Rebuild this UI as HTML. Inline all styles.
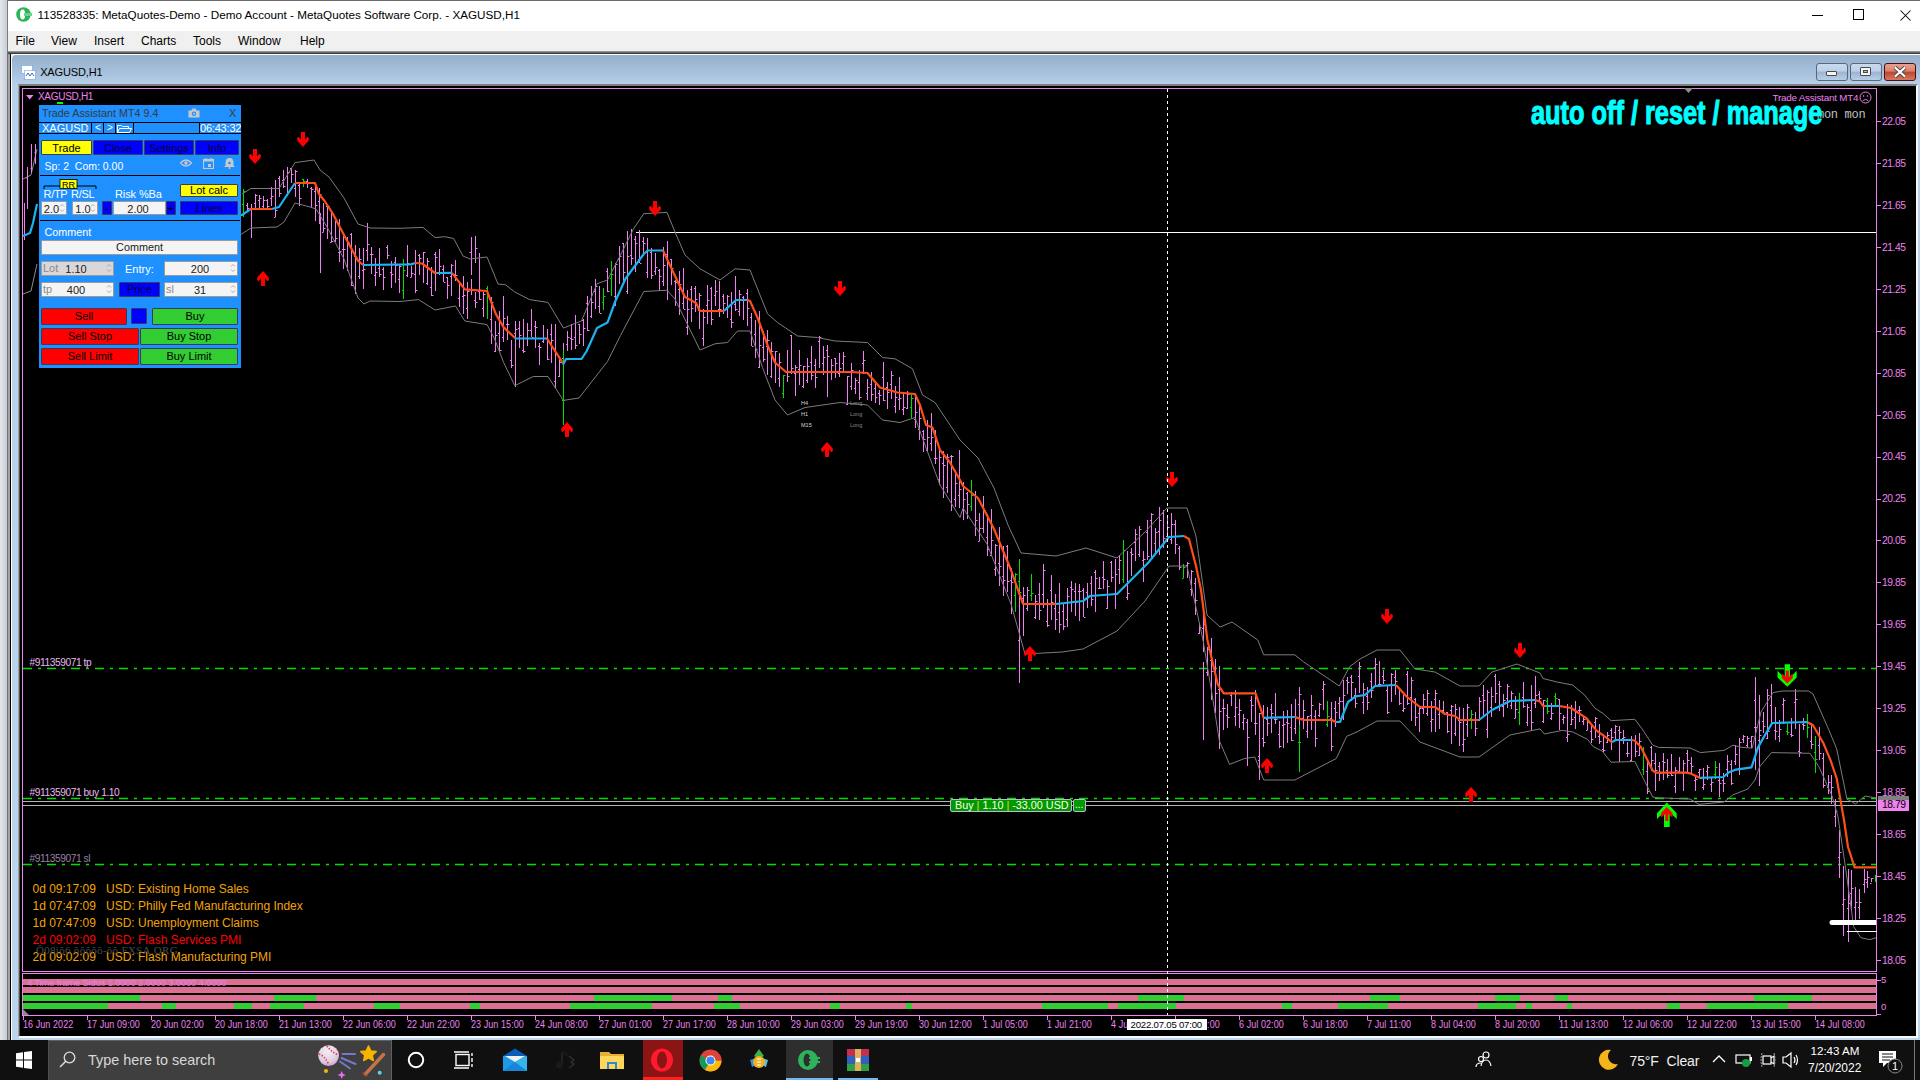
<!DOCTYPE html>
<html><head><meta charset="utf-8">
<style>
*{box-sizing:border-box}
html,body{margin:0;padding:0;width:1920px;height:1080px;overflow:hidden;background:#000;font-family:"Liberation Sans", sans-serif}
.a{position:absolute}
.t{position:absolute;white-space:nowrap;line-height:1}
</style></head><body>
<div class="a" style="left:0;top:0;width:8px;height:1040px;background:linear-gradient(90deg,#e2e8ee,#c4cad0)"></div>
<div class="a" style="left:7px;top:0;width:1913px;height:1040px;background:#f0f0f0;border-left:1px solid #7a7a7a;border-top:1px solid #6a6a6a"></div>
<div class="a" style="left:7px;top:52px;width:4px;height:988px;background:linear-gradient(90deg,#707478 0,#707478 1px,#a4a4a4 1px,#a4a4a4 3px,#000 3px)"></div>
<div class="a" style="left:8px;top:1px;width:1912px;height:30px;background:#fff"></div>
<!-- MDI child -->
<div class="a" style="left:8px;top:51px;width:1912px;height:3px;background:linear-gradient(180deg,#a8a8a8,#282828)"></div>
<div class="a" style="left:11px;top:54px;width:1909px;height:986px;background:linear-gradient(180deg,#95afcc 0px,#a6bfda 16px,#b8d0e9 30px,#bcd4ec 100%);border-left:1px solid #fff;border-top:1px solid #fff;border-top-left-radius:5px"></div>
<div class="a" style="left:18px;top:84px;width:1900px;height:954px;background:#000;border-left:1px solid #a0a0a0;border-top:2px solid #808080;border-right:2px solid #f8f8f8;border-bottom:2px solid #f8f8f8"></div>
<div class="a" style="left:19px;top:86px;width:1px;height:950px;background:#505050"></div>
<!-- chart border -->
<div class="a" style="left:22px;top:88px;width:1855px;height:884px;border:1px solid #ee82ee"></div>
<div class="a" style="left:22px;top:973px;width:1855px;height:43px;border:1px solid #ee82ee"></div>
<div class="a" style="left:23px;top:979px;width:1853px;height:6px;background:#db7093"></div><div class="a" style="left:23px;top:987px;width:1853px;height:6px;background:#db7093"></div><div class="a" style="left:23px;top:995px;width:117px;height:6px;background:#32cd32"></div><div class="a" style="left:140px;top:995px;width:134px;height:6px;background:#db7093"></div><div class="a" style="left:274px;top:995px;width:42px;height:6px;background:#32cd32"></div><div class="a" style="left:316px;top:995px;width:278px;height:6px;background:#db7093"></div><div class="a" style="left:594px;top:995px;width:78px;height:6px;background:#32cd32"></div><div class="a" style="left:672px;top:995px;width:46px;height:6px;background:#db7093"></div><div class="a" style="left:718px;top:995px;width:14px;height:6px;background:#32cd32"></div><div class="a" style="left:732px;top:995px;width:406px;height:6px;background:#db7093"></div><div class="a" style="left:1138px;top:995px;width:46px;height:6px;background:#32cd32"></div><div class="a" style="left:1184px;top:995px;width:186px;height:6px;background:#db7093"></div><div class="a" style="left:1370px;top:995px;width:30px;height:6px;background:#32cd32"></div><div class="a" style="left:1400px;top:995px;width:95px;height:6px;background:#db7093"></div><div class="a" style="left:1495px;top:995px;width:25px;height:6px;background:#32cd32"></div><div class="a" style="left:1520px;top:995px;width:35px;height:6px;background:#db7093"></div><div class="a" style="left:1555px;top:995px;width:13px;height:6px;background:#32cd32"></div><div class="a" style="left:1568px;top:995px;width:186px;height:6px;background:#db7093"></div><div class="a" style="left:1754px;top:995px;width:58px;height:6px;background:#32cd32"></div><div class="a" style="left:1812px;top:995px;width:64px;height:6px;background:#db7093"></div><div class="a" style="left:23px;top:1003px;width:85px;height:6px;background:#32cd32"></div><div class="a" style="left:108px;top:1003px;width:54px;height:6px;background:#db7093"></div><div class="a" style="left:162px;top:1003px;width:14px;height:6px;background:#32cd32"></div><div class="a" style="left:176px;top:1003px;width:58px;height:6px;background:#db7093"></div><div class="a" style="left:234px;top:1003px;width:18px;height:6px;background:#32cd32"></div><div class="a" style="left:252px;top:1003px;width:18px;height:6px;background:#db7093"></div><div class="a" style="left:270px;top:1003px;width:34px;height:6px;background:#32cd32"></div><div class="a" style="left:304px;top:1003px;width:70px;height:6px;background:#db7093"></div><div class="a" style="left:374px;top:1003px;width:26px;height:6px;background:#32cd32"></div><div class="a" style="left:400px;top:1003px;width:70px;height:6px;background:#db7093"></div><div class="a" style="left:470px;top:1003px;width:10px;height:6px;background:#32cd32"></div><div class="a" style="left:480px;top:1003px;width:90px;height:6px;background:#db7093"></div><div class="a" style="left:570px;top:1003px;width:82px;height:6px;background:#32cd32"></div><div class="a" style="left:652px;top:1003px;width:62px;height:6px;background:#db7093"></div><div class="a" style="left:714px;top:1003px;width:26px;height:6px;background:#32cd32"></div><div class="a" style="left:740px;top:1003px;width:90px;height:6px;background:#db7093"></div><div class="a" style="left:830px;top:1003px;width:10px;height:6px;background:#32cd32"></div><div class="a" style="left:840px;top:1003px;width:66px;height:6px;background:#db7093"></div><div class="a" style="left:906px;top:1003px;width:6px;height:6px;background:#32cd32"></div><div class="a" style="left:912px;top:1003px;width:130px;height:6px;background:#db7093"></div><div class="a" style="left:1042px;top:1003px;width:66px;height:6px;background:#32cd32"></div><div class="a" style="left:1108px;top:1003px;width:10px;height:6px;background:#db7093"></div><div class="a" style="left:1118px;top:1003px;width:58px;height:6px;background:#32cd32"></div><div class="a" style="left:1176px;top:1003px;width:106px;height:6px;background:#db7093"></div><div class="a" style="left:1282px;top:1003px;width:10px;height:6px;background:#32cd32"></div><div class="a" style="left:1292px;top:1003px;width:46px;height:6px;background:#db7093"></div><div class="a" style="left:1338px;top:1003px;width:50px;height:6px;background:#32cd32"></div><div class="a" style="left:1388px;top:1003px;width:90px;height:6px;background:#db7093"></div><div class="a" style="left:1478px;top:1003px;width:38px;height:6px;background:#32cd32"></div><div class="a" style="left:1516px;top:1003px;width:10px;height:6px;background:#db7093"></div><div class="a" style="left:1526px;top:1003px;width:6px;height:6px;background:#32cd32"></div><div class="a" style="left:1532px;top:1003px;width:35px;height:6px;background:#db7093"></div><div class="a" style="left:1567px;top:1003px;width:5px;height:6px;background:#32cd32"></div><div class="a" style="left:1572px;top:1003px;width:95px;height:6px;background:#db7093"></div><div class="a" style="left:1667px;top:1003px;width:13px;height:6px;background:#32cd32"></div><div class="a" style="left:1680px;top:1003px;width:27px;height:6px;background:#db7093"></div><div class="a" style="left:1707px;top:1003px;width:81px;height:6px;background:#32cd32"></div><div class="a" style="left:1788px;top:1003px;width:88px;height:6px;background:#db7093"></div>
<svg class="a" style="left:0;top:0" width="1920" height="1080"><line x1="23" y1="668.5" x2="1876" y2="668.5" stroke="#00e000" stroke-width="1.3" stroke-dasharray="9 6 3 6"/><line x1="23" y1="798.5" x2="1876" y2="798.5" stroke="#00e000" stroke-width="1.3" stroke-dasharray="9 6 3 6"/><line x1="23" y1="864.5" x2="1876" y2="864.5" stroke="#00e000" stroke-width="1.3" stroke-dasharray="9 6 3 6"/><line x1="23" y1="801.5" x2="1876" y2="801.5" stroke="#b4b4b4" stroke-width="1"/><line x1="23" y1="805.5" x2="1876" y2="805.5" stroke="#b4b4b4" stroke-width="1"/><line x1="636" y1="232.5" x2="1876" y2="232.5" stroke="#ffffff" stroke-width="1"/><g stroke-width="1" fill="none"><path d="M243.5 189V217M242 204.5h1.5M244 191.5h1.5" stroke="#00e000"/><path d="M247.5 203V211M246 205.5h1.5M248 208.5h1.5" stroke="#ee82ee"/><path d="M251.5 204V238M250 209.5h1.5M252 208.5h1.5" stroke="#ee82ee"/><path d="M255.5 194V209M254 203.5h1.5M256 195.5h1.5" stroke="#ee82ee"/><path d="M259.5 195V208M258 200.5h1.5M260 198.5h1.5" stroke="#ee82ee"/><path d="M263.5 196V209M262 206.5h1.5M264 200.5h1.5" stroke="#ee82ee"/><path d="M267.5 199V209M266 200.5h1.5M268 206.5h1.5" stroke="#ee82ee"/><path d="M271.5 187V206M270 198.5h1.5M272 196.5h1.5" stroke="#ee82ee"/><path d="M275.5 180V217M274 217.5h1.5M276 210.5h1.5" stroke="#ee82ee"/><path d="M279.5 176V197M278 178.5h1.5M280 193.5h1.5" stroke="#ee82ee"/><path d="M283.5 170V188M282 180.5h1.5M284 186.5h1.5" stroke="#ee82ee"/><path d="M287.5 167V196M286 194.5h1.5M288 172.5h1.5" stroke="#ee82ee"/><path d="M291.5 168V183M290 168.5h1.5M292 174.5h1.5" stroke="#ee82ee"/><path d="M295.5 170V197M294 188.5h1.5M296 171.5h1.5" stroke="#ee82ee"/><path d="M299.5 182V206M298 185.5h1.5M300 198.5h1.5" stroke="#ee82ee"/><path d="M303.5 179V187M302 179.5h1.5M304 181.5h1.5" stroke="#00e000"/><path d="M307.5 179V188M306 181.5h1.5M308 182.5h1.5" stroke="#ee82ee"/><path d="M311.5 187V207M310 188.5h1.5M312 189.5h1.5" stroke="#ee82ee"/><path d="M315.5 186V221M314 191.5h1.5M316 205.5h1.5" stroke="#ee82ee"/><path d="M319.5 188V224M318 201.5h1.5M320 194.5h1.5" stroke="#ee82ee"/><path d="M323.5 203V232M322 232.5h1.5M324 228.5h1.5" stroke="#ee82ee"/><path d="M327.5 205V239M326 206.5h1.5M328 206.5h1.5" stroke="#ee82ee"/><path d="M331.5 211V242M330 242.5h1.5M332 241.5h1.5" stroke="#ee82ee"/><path d="M335.5 221V242M334 240.5h1.5M336 238.5h1.5" stroke="#ee82ee"/><path d="M339.5 219V262M338 252.5h1.5M340 251.5h1.5" stroke="#ee82ee"/><path d="M343.5 235V269M342 249.5h1.5M344 249.5h1.5" stroke="#ee82ee"/><path d="M347.5 237V271M346 265.5h1.5M348 242.5h1.5" stroke="#ee82ee"/><path d="M351.5 233V286M350 234.5h1.5M352 285.5h1.5" stroke="#ee82ee"/><path d="M355.5 245V294M354 256.5h1.5M356 258.5h1.5" stroke="#ee82ee"/><path d="M359.5 248V279M358 276.5h1.5M360 259.5h1.5" stroke="#ee82ee"/><path d="M363.5 248V289M362 270.5h1.5M364 269.5h1.5" stroke="#ee82ee"/><path d="M367.5 223V261M366 250.5h1.5M368 244.5h1.5" stroke="#ee82ee"/><path d="M371.5 247V274M370 254.5h1.5M372 254.5h1.5" stroke="#ee82ee"/><path d="M375.5 258V286M374 275.5h1.5M376 272.5h1.5" stroke="#ee82ee"/><path d="M379.5 248V277M378 268.5h1.5M380 274.5h1.5" stroke="#ee82ee"/><path d="M383.5 267V290M382 269.5h1.5M384 277.5h1.5" stroke="#ee82ee"/><path d="M387.5 245V259M386 247.5h1.5M388 255.5h1.5" stroke="#ee82ee"/><path d="M391.5 261V288M390 272.5h1.5M392 274.5h1.5" stroke="#ee82ee"/><path d="M395.5 257V283M394 262.5h1.5M396 265.5h1.5" stroke="#ee82ee"/><path d="M399.5 265V293M398 279.5h1.5M400 266.5h1.5" stroke="#ee82ee"/><path d="M403.5 259V299M402 290.5h1.5M404 270.5h1.5" stroke="#00e000"/><path d="M407.5 245V277M406 275.5h1.5M408 263.5h1.5" stroke="#ee82ee"/><path d="M411.5 266V277M410 277.5h1.5M412 273.5h1.5" stroke="#ee82ee"/><path d="M415.5 250V293M414 274.5h1.5M416 290.5h1.5" stroke="#ee82ee"/><path d="M419.5 254V275M418 255.5h1.5M420 258.5h1.5" stroke="#ee82ee"/><path d="M423.5 252V283M422 263.5h1.5M424 252.5h1.5" stroke="#ee82ee"/><path d="M427.5 258V285M426 283.5h1.5M428 261.5h1.5" stroke="#ee82ee"/><path d="M431.5 267V296M430 287.5h1.5M432 295.5h1.5" stroke="#ee82ee"/><path d="M435.5 252V291M434 254.5h1.5M436 257.5h1.5" stroke="#ee82ee"/><path d="M439.5 249V275M438 272.5h1.5M440 266.5h1.5" stroke="#ee82ee"/><path d="M443.5 265V282M442 269.5h1.5M444 282.5h1.5" stroke="#ee82ee"/><path d="M447.5 277V299M446 277.5h1.5M448 285.5h1.5" stroke="#ee82ee"/><path d="M451.5 264V296M450 276.5h1.5M452 265.5h1.5" stroke="#ee82ee"/><path d="M455.5 260V281M454 274.5h1.5M456 275.5h1.5" stroke="#ee82ee"/><path d="M459.5 281V307M458 298.5h1.5M460 283.5h1.5" stroke="#ee82ee"/><path d="M463.5 276V314M462 296.5h1.5M464 295.5h1.5" stroke="#ee82ee"/><path d="M467.5 282V319M466 308.5h1.5M468 291.5h1.5" stroke="#ee82ee"/><path d="M471.5 279V295M470 289.5h1.5M472 289.5h1.5" stroke="#ee82ee"/><path d="M475.5 292V308M474 300.5h1.5M476 302.5h1.5" stroke="#ee82ee"/><path d="M479.5 267V300M478 291.5h1.5M480 299.5h1.5" stroke="#ee82ee"/><path d="M483.5 292V317M482 308.5h1.5M484 294.5h1.5" stroke="#ee82ee"/><path d="M487.5 286V319M486 288.5h1.5M488 295.5h1.5" stroke="#00e000"/><path d="M491.5 297V344M490 319.5h1.5M492 302.5h1.5" stroke="#ee82ee"/><path d="M495.5 321V352M494 351.5h1.5M496 335.5h1.5" stroke="#ee82ee"/><path d="M499.5 311V352M498 333.5h1.5M500 350.5h1.5" stroke="#ee82ee"/><path d="M503.5 296V342M502 337.5h1.5M504 318.5h1.5" stroke="#ee82ee"/><path d="M507.5 316V340M506 324.5h1.5M508 324.5h1.5" stroke="#ee82ee"/><path d="M511.5 340V368M510 360.5h1.5M512 365.5h1.5" stroke="#ee82ee"/><path d="M515.5 321V348M514 333.5h1.5M516 329.5h1.5" stroke="#ee82ee"/><path d="M519.5 321V348M518 328.5h1.5M520 335.5h1.5" stroke="#ee82ee"/><path d="M523.5 319V353M522 350.5h1.5M524 351.5h1.5" stroke="#ee82ee"/><path d="M527.5 323V346M526 338.5h1.5M528 330.5h1.5" stroke="#ee82ee"/><path d="M531.5 309V337M530 330.5h1.5M532 337.5h1.5" stroke="#ee82ee"/><path d="M535.5 321V348M534 326.5h1.5M536 327.5h1.5" stroke="#ee82ee"/><path d="M539.5 343V365M538 346.5h1.5M540 347.5h1.5" stroke="#ee82ee"/><path d="M543.5 325V343M542 341.5h1.5M544 338.5h1.5" stroke="#ee82ee"/><path d="M547.5 329V360M546 338.5h1.5M548 359.5h1.5" stroke="#ee82ee"/><path d="M551.5 324V363M550 334.5h1.5M552 340.5h1.5" stroke="#ee82ee"/><path d="M555.5 324V388M554 381.5h1.5M556 354.5h1.5" stroke="#ee82ee"/><path d="M559.5 356V377M558 376.5h1.5M560 362.5h1.5" stroke="#ee82ee"/><path d="M563.5 343V366M562 358.5h1.5M564 361.5h1.5" stroke="#ee82ee"/><path d="M567.5 331V351M566 344.5h1.5M568 337.5h1.5" stroke="#ee82ee"/><path d="M571.5 324V350M570 338.5h1.5M572 339.5h1.5" stroke="#ee82ee"/><path d="M575.5 315V349M574 337.5h1.5M576 345.5h1.5" stroke="#ee82ee"/><path d="M579.5 324V344M578 324.5h1.5M580 334.5h1.5" stroke="#ee82ee"/><path d="M583.5 319V346M582 320.5h1.5M584 328.5h1.5" stroke="#ee82ee"/><path d="M587.5 296V331M586 303.5h1.5M588 330.5h1.5" stroke="#ee82ee"/><path d="M591.5 286V318M590 316.5h1.5M592 302.5h1.5" stroke="#ee82ee"/><path d="M595.5 279V309M594 291.5h1.5M596 286.5h1.5" stroke="#ee82ee"/><path d="M599.5 286V313M598 306.5h1.5M600 313.5h1.5" stroke="#ee82ee"/><path d="M603.5 288V310M602 302.5h1.5M604 296.5h1.5" stroke="#00e000"/><path d="M607.5 268V292M606 271.5h1.5M608 291.5h1.5" stroke="#ee82ee"/><path d="M611.5 261V296M610 278.5h1.5M612 274.5h1.5" stroke="#00e000"/><path d="M615.5 263V306M614 296.5h1.5M616 264.5h1.5" stroke="#ee82ee"/><path d="M619.5 246V284M618 259.5h1.5M620 256.5h1.5" stroke="#ee82ee"/><path d="M623.5 243V281M622 243.5h1.5M624 272.5h1.5" stroke="#ee82ee"/><path d="M627.5 231V294M626 291.5h1.5M628 256.5h1.5" stroke="#ee82ee"/><path d="M631.5 229V265M630 255.5h1.5M632 258.5h1.5" stroke="#ee82ee"/><path d="M635.5 236V272M634 239.5h1.5M636 243.5h1.5" stroke="#ee82ee"/><path d="M639.5 230V263M638 259.5h1.5M640 263.5h1.5" stroke="#ee82ee"/><path d="M643.5 237V253M642 241.5h1.5M644 243.5h1.5" stroke="#ee82ee"/><path d="M647.5 238V278M646 272.5h1.5M648 250.5h1.5" stroke="#ee82ee"/><path d="M651.5 248V279M650 252.5h1.5M652 275.5h1.5" stroke="#ee82ee"/><path d="M655.5 253V275M654 271.5h1.5M656 267.5h1.5" stroke="#ee82ee"/><path d="M659.5 269V291M658 270.5h1.5M660 276.5h1.5" stroke="#ee82ee"/><path d="M663.5 247V286M662 281.5h1.5M664 265.5h1.5" stroke="#ee82ee"/><path d="M667.5 241V300M666 254.5h1.5M668 263.5h1.5" stroke="#ee82ee"/><path d="M671.5 259V285M670 259.5h1.5M672 268.5h1.5" stroke="#ee82ee"/><path d="M675.5 280V306M674 281.5h1.5M676 282.5h1.5" stroke="#ee82ee"/><path d="M679.5 271V315M678 289.5h1.5M680 284.5h1.5" stroke="#ee82ee"/><path d="M683.5 268V309M682 303.5h1.5M684 309.5h1.5" stroke="#ee82ee"/><path d="M687.5 290V335M686 327.5h1.5M688 309.5h1.5" stroke="#ee82ee"/><path d="M691.5 286V322M690 289.5h1.5M692 308.5h1.5" stroke="#ee82ee"/><path d="M695.5 286V312M694 288.5h1.5M696 299.5h1.5" stroke="#ee82ee"/><path d="M699.5 293V329M698 310.5h1.5M700 295.5h1.5" stroke="#ee82ee"/><path d="M703.5 309V346M702 338.5h1.5M704 317.5h1.5" stroke="#ee82ee"/><path d="M707.5 285V324M706 305.5h1.5M708 300.5h1.5" stroke="#ee82ee"/><path d="M711.5 287V325M710 288.5h1.5M712 319.5h1.5" stroke="#ee82ee"/><path d="M715.5 280V306M714 295.5h1.5M716 291.5h1.5" stroke="#ee82ee"/><path d="M719.5 281V317M718 309.5h1.5M720 309.5h1.5" stroke="#ee82ee"/><path d="M723.5 294V314M722 296.5h1.5M724 303.5h1.5" stroke="#ee82ee"/><path d="M727.5 295V318M726 307.5h1.5M728 296.5h1.5" stroke="#ee82ee"/><path d="M731.5 292V328M730 319.5h1.5M732 322.5h1.5" stroke="#ee82ee"/><path d="M735.5 276V311M734 304.5h1.5M736 309.5h1.5" stroke="#ee82ee"/><path d="M739.5 290V316M738 311.5h1.5M740 294.5h1.5" stroke="#ee82ee"/><path d="M743.5 296V320M742 297.5h1.5M744 300.5h1.5" stroke="#ee82ee"/><path d="M747.5 289V326M746 293.5h1.5M748 308.5h1.5" stroke="#ee82ee"/><path d="M751.5 313V346M750 317.5h1.5M752 346.5h1.5" stroke="#ee82ee"/><path d="M755.5 320V358M754 334.5h1.5M756 349.5h1.5" stroke="#ee82ee"/><path d="M759.5 311V368M758 367.5h1.5M760 345.5h1.5" stroke="#ee82ee"/><path d="M763.5 331V362M762 347.5h1.5M764 359.5h1.5" stroke="#ee82ee"/><path d="M767.5 330V375M766 346.5h1.5M768 340.5h1.5" stroke="#ee82ee"/><path d="M771.5 342V378M770 376.5h1.5M772 351.5h1.5" stroke="#ee82ee"/><path d="M775.5 351V383M774 359.5h1.5M776 351.5h1.5" stroke="#ee82ee"/><path d="M779.5 353V387M778 378.5h1.5M780 362.5h1.5" stroke="#ee82ee"/><path d="M783.5 375V398M782 393.5h1.5M784 375.5h1.5" stroke="#00e000"/><path d="M787.5 350V382M786 371.5h1.5M788 376.5h1.5" stroke="#ee82ee"/><path d="M791.5 335V374M790 335.5h1.5M792 368.5h1.5" stroke="#ee82ee"/><path d="M795.5 365V396M794 373.5h1.5M796 367.5h1.5" stroke="#ee82ee"/><path d="M799.5 350V385M798 369.5h1.5M800 365.5h1.5" stroke="#ee82ee"/><path d="M803.5 366V388M802 386.5h1.5M804 366.5h1.5" stroke="#ee82ee"/><path d="M807.5 358V383M806 380.5h1.5M808 366.5h1.5" stroke="#ee82ee"/><path d="M811.5 346V380M810 362.5h1.5M812 375.5h1.5" stroke="#ee82ee"/><path d="M815.5 359V388M814 365.5h1.5M816 377.5h1.5" stroke="#ee82ee"/><path d="M819.5 336V368M818 341.5h1.5M820 337.5h1.5" stroke="#ee82ee"/><path d="M823.5 346V375M822 363.5h1.5M824 357.5h1.5" stroke="#ee82ee"/><path d="M827.5 345V397M826 350.5h1.5M828 356.5h1.5" stroke="#ee82ee"/><path d="M831.5 359V380M830 372.5h1.5M832 365.5h1.5" stroke="#ee82ee"/><path d="M835.5 358V378M834 358.5h1.5M836 363.5h1.5" stroke="#ee82ee"/><path d="M839.5 353V377M838 373.5h1.5M840 368.5h1.5" stroke="#ee82ee"/><path d="M843.5 352V372M842 363.5h1.5M844 356.5h1.5" stroke="#ee82ee"/><path d="M847.5 376V405M846 404.5h1.5M848 376.5h1.5" stroke="#ee82ee"/><path d="M851.5 363V390M850 386.5h1.5M852 370.5h1.5" stroke="#ee82ee"/><path d="M855.5 378V394M854 388.5h1.5M856 380.5h1.5" stroke="#ee82ee"/><path d="M859.5 370V400M858 382.5h1.5M860 397.5h1.5" stroke="#ee82ee"/><path d="M863.5 351V374M862 363.5h1.5M864 360.5h1.5" stroke="#ee82ee"/><path d="M867.5 379V400M866 393.5h1.5M868 387.5h1.5" stroke="#ee82ee"/><path d="M871.5 372V401M870 384.5h1.5M872 394.5h1.5" stroke="#ee82ee"/><path d="M875.5 381V403M874 388.5h1.5M876 397.5h1.5" stroke="#ee82ee"/><path d="M879.5 390V405M878 393.5h1.5M880 395.5h1.5" stroke="#ee82ee"/><path d="M883.5 362V401M882 377.5h1.5M884 400.5h1.5" stroke="#ee82ee"/><path d="M887.5 382V409M886 387.5h1.5M888 392.5h1.5" stroke="#ee82ee"/><path d="M891.5 371V399M890 384.5h1.5M892 375.5h1.5" stroke="#ee82ee"/><path d="M895.5 386V413M894 406.5h1.5M896 397.5h1.5" stroke="#ee82ee"/><path d="M899.5 377V410M898 399.5h1.5M900 398.5h1.5" stroke="#ee82ee"/><path d="M903.5 394V415M902 409.5h1.5M904 407.5h1.5" stroke="#ee82ee"/><path d="M907.5 391V409M906 408.5h1.5M908 394.5h1.5" stroke="#ee82ee"/><path d="M911.5 394V418M910 407.5h1.5M912 398.5h1.5" stroke="#00e000"/><path d="M915.5 396V428M914 419.5h1.5M916 412.5h1.5" stroke="#ee82ee"/><path d="M919.5 403V440M918 429.5h1.5M920 418.5h1.5" stroke="#ee82ee"/><path d="M923.5 430V452M922 431.5h1.5M924 439.5h1.5" stroke="#ee82ee"/><path d="M927.5 420V452M926 450.5h1.5M928 437.5h1.5" stroke="#ee82ee"/><path d="M931.5 413V451M930 443.5h1.5M932 437.5h1.5" stroke="#ee82ee"/><path d="M935.5 430V464M934 458.5h1.5M936 458.5h1.5" stroke="#ee82ee"/><path d="M939.5 447V485M938 479.5h1.5M940 457.5h1.5" stroke="#ee82ee"/><path d="M943.5 451V498M942 463.5h1.5M944 465.5h1.5" stroke="#ee82ee"/><path d="M947.5 454V493M946 487.5h1.5M948 457.5h1.5" stroke="#ee82ee"/><path d="M951.5 455V511M950 456.5h1.5M952 456.5h1.5" stroke="#ee82ee"/><path d="M955.5 470V507M954 499.5h1.5M956 483.5h1.5" stroke="#ee82ee"/><path d="M959.5 450V508M958 495.5h1.5M960 489.5h1.5" stroke="#ee82ee"/><path d="M963.5 482V520M962 510.5h1.5M964 499.5h1.5" stroke="#ee82ee"/><path d="M967.5 492V519M966 493.5h1.5M968 504.5h1.5" stroke="#ee82ee"/><path d="M971.5 480V511M970 506.5h1.5M972 495.5h1.5" stroke="#00e000"/><path d="M975.5 491V536M974 495.5h1.5M976 520.5h1.5" stroke="#ee82ee"/><path d="M979.5 513V541M978 541.5h1.5M980 528.5h1.5" stroke="#ee82ee"/><path d="M983.5 496V533M982 528.5h1.5M984 510.5h1.5" stroke="#ee82ee"/><path d="M987.5 514V556M986 537.5h1.5M988 549.5h1.5" stroke="#ee82ee"/><path d="M991.5 509V556M990 555.5h1.5M992 540.5h1.5" stroke="#ee82ee"/><path d="M995.5 544V576M994 569.5h1.5M996 545.5h1.5" stroke="#ee82ee"/><path d="M999.5 527V586M998 563.5h1.5M1000 566.5h1.5" stroke="#ee82ee"/><path d="M1003.5 546V596M1002 576.5h1.5M1004 580.5h1.5" stroke="#ee82ee"/><path d="M1007.5 545V592M1006 546.5h1.5M1008 581.5h1.5" stroke="#ee82ee"/><path d="M1011.5 568V614M1010 580.5h1.5M1012 582.5h1.5" stroke="#ee82ee"/><path d="M1015.5 573V612M1014 595.5h1.5M1016 574.5h1.5" stroke="#00e000"/><path d="M1019.5 559V615M1018 581.5h1.5M1020 592.5h1.5" stroke="#00e000"/><path d="M1023.5 587V636M1022 598.5h1.5M1024 595.5h1.5" stroke="#ee82ee"/><path d="M1027.5 587V611M1026 608.5h1.5M1028 590.5h1.5" stroke="#ee82ee"/><path d="M1031.5 574V601M1030 595.5h1.5M1032 593.5h1.5" stroke="#00e000"/><path d="M1035.5 595V619M1034 617.5h1.5M1036 601.5h1.5" stroke="#ee82ee"/><path d="M1039.5 583V620M1038 594.5h1.5M1040 610.5h1.5" stroke="#ee82ee"/><path d="M1043.5 564V608M1042 594.5h1.5M1044 570.5h1.5" stroke="#ee82ee"/><path d="M1047.5 599V627M1046 621.5h1.5M1048 625.5h1.5" stroke="#ee82ee"/><path d="M1051.5 575V620M1050 590.5h1.5M1052 602.5h1.5" stroke="#ee82ee"/><path d="M1055.5 594V630M1054 608.5h1.5M1056 619.5h1.5" stroke="#ee82ee"/><path d="M1059.5 583V633M1058 612.5h1.5M1060 624.5h1.5" stroke="#ee82ee"/><path d="M1063.5 604V630M1062 611.5h1.5M1064 626.5h1.5" stroke="#ee82ee"/><path d="M1067.5 588V627M1066 619.5h1.5M1068 596.5h1.5" stroke="#ee82ee"/><path d="M1071.5 581V612M1070 587.5h1.5M1072 589.5h1.5" stroke="#ee82ee"/><path d="M1075.5 583V616M1074 591.5h1.5M1076 602.5h1.5" stroke="#ee82ee"/><path d="M1079.5 584V621M1078 591.5h1.5M1080 591.5h1.5" stroke="#ee82ee"/><path d="M1083.5 588V617M1082 590.5h1.5M1084 617.5h1.5" stroke="#ee82ee"/><path d="M1087.5 583V608M1086 592.5h1.5M1088 596.5h1.5" stroke="#ee82ee"/><path d="M1091.5 576V606M1090 583.5h1.5M1092 599.5h1.5" stroke="#ee82ee"/><path d="M1095.5 570V612M1094 572.5h1.5M1096 578.5h1.5" stroke="#ee82ee"/><path d="M1099.5 577V589M1098 588.5h1.5M1100 588.5h1.5" stroke="#ee82ee"/><path d="M1103.5 561V589M1102 577.5h1.5M1104 579.5h1.5" stroke="#ee82ee"/><path d="M1107.5 580V609M1106 608.5h1.5M1108 586.5h1.5" stroke="#ee82ee"/><path d="M1111.5 561V582M1110 562.5h1.5M1112 577.5h1.5" stroke="#ee82ee"/><path d="M1115.5 559V609M1114 593.5h1.5M1116 574.5h1.5" stroke="#ee82ee"/><path d="M1119.5 555V584M1118 569.5h1.5M1120 560.5h1.5" stroke="#ee82ee"/><path d="M1123.5 540V583M1122 579.5h1.5M1124 550.5h1.5" stroke="#00e000"/><path d="M1127.5 551V600M1126 597.5h1.5M1128 593.5h1.5" stroke="#ee82ee"/><path d="M1131.5 548V576M1130 552.5h1.5M1132 554.5h1.5" stroke="#ee82ee"/><path d="M1135.5 529V561M1134 542.5h1.5M1136 534.5h1.5" stroke="#ee82ee"/><path d="M1139.5 526V557M1138 554.5h1.5M1140 529.5h1.5" stroke="#ee82ee"/><path d="M1143.5 551V582M1142 560.5h1.5M1144 559.5h1.5" stroke="#ee82ee"/><path d="M1147.5 520V560M1146 532.5h1.5M1148 556.5h1.5" stroke="#ee82ee"/><path d="M1151.5 513V557M1150 520.5h1.5M1152 514.5h1.5" stroke="#ee82ee"/><path d="M1155.5 528V554M1154 543.5h1.5M1156 532.5h1.5" stroke="#ee82ee"/><path d="M1159.5 507V555M1158 531.5h1.5M1160 520.5h1.5" stroke="#ee82ee"/><path d="M1163.5 510V548M1162 513.5h1.5M1164 538.5h1.5" stroke="#ee82ee"/><path d="M1167.5 515V539M1166 536.5h1.5M1168 527.5h1.5" stroke="#ee82ee"/><path d="M1171.5 513V544M1170 539.5h1.5M1172 524.5h1.5" stroke="#ee82ee"/><path d="M1175.5 520V554M1174 524.5h1.5M1176 544.5h1.5" stroke="#ee82ee"/><path d="M1179.5 546V570M1178 548.5h1.5M1180 567.5h1.5" stroke="#ee82ee"/><path d="M1183.5 564V578M1182 578.5h1.5M1184 567.5h1.5" stroke="#00e000"/><path d="M1187.5 562V578M1186 565.5h1.5M1188 563.5h1.5" stroke="#ee82ee"/><path d="M1191.5 570V596M1190 589.5h1.5M1192 571.5h1.5" stroke="#ee82ee"/><path d="M1195.5 578V615M1194 583.5h1.5M1196 600.5h1.5" stroke="#ee82ee"/><path d="M1199.5 623V634M1198 633.5h1.5M1200 627.5h1.5" stroke="#ee82ee"/><path d="M1203.5 615V652M1202 628.5h1.5M1204 624.5h1.5" stroke="#ee82ee"/><path d="M1207.5 647V676M1206 672.5h1.5M1208 649.5h1.5" stroke="#ee82ee"/><path d="M1211.5 638V700M1210 660.5h1.5M1212 671.5h1.5" stroke="#ee82ee"/><path d="M1215.5 659V713M1214 710.5h1.5M1216 693.5h1.5" stroke="#ee82ee"/><path d="M1219.5 666V749M1218 689.5h1.5M1220 711.5h1.5" stroke="#ee82ee"/><path d="M1223.5 699V730M1222 708.5h1.5M1224 708.5h1.5" stroke="#ee82ee"/><path d="M1227.5 704V728M1226 715.5h1.5M1228 717.5h1.5" stroke="#ee82ee"/><path d="M1231.5 692V706M1230 695.5h1.5M1232 693.5h1.5" stroke="#ee82ee"/><path d="M1235.5 690V726M1234 716.5h1.5M1236 707.5h1.5" stroke="#ee82ee"/><path d="M1239.5 699V728M1238 714.5h1.5M1240 710.5h1.5" stroke="#ee82ee"/><path d="M1243.5 714V730M1242 722.5h1.5M1244 718.5h1.5" stroke="#ee82ee"/><path d="M1247.5 719V766M1246 722.5h1.5M1248 737.5h1.5" stroke="#ee82ee"/><path d="M1251.5 696V722M1250 700.5h1.5M1252 705.5h1.5" stroke="#ee82ee"/><path d="M1255.5 690V735M1254 723.5h1.5M1256 723.5h1.5" stroke="#ee82ee"/><path d="M1259.5 713V762M1258 756.5h1.5M1260 713.5h1.5" stroke="#ee82ee"/><path d="M1263.5 705V747M1262 738.5h1.5M1264 742.5h1.5" stroke="#ee82ee"/><path d="M1267.5 707V736M1266 719.5h1.5M1268 723.5h1.5" stroke="#ee82ee"/><path d="M1271.5 704V733M1270 709.5h1.5M1272 713.5h1.5" stroke="#ee82ee"/><path d="M1275.5 693V724M1274 719.5h1.5M1276 719.5h1.5" stroke="#ee82ee"/><path d="M1279.5 721V748M1278 734.5h1.5M1280 746.5h1.5" stroke="#ee82ee"/><path d="M1283.5 711V748M1282 725.5h1.5M1284 724.5h1.5" stroke="#ee82ee"/><path d="M1287.5 710V743M1286 722.5h1.5M1288 723.5h1.5" stroke="#ee82ee"/><path d="M1291.5 704V741M1290 727.5h1.5M1292 740.5h1.5" stroke="#ee82ee"/><path d="M1295.5 699V734M1294 728.5h1.5M1296 717.5h1.5" stroke="#ee82ee"/><path d="M1299.5 687V728M1298 704.5h1.5M1300 694.5h1.5" stroke="#ee82ee"/><path d="M1303.5 700V729M1302 718.5h1.5M1304 710.5h1.5" stroke="#ee82ee"/><path d="M1307.5 716V738M1306 731.5h1.5M1308 716.5h1.5" stroke="#ee82ee"/><path d="M1311.5 695V730M1310 715.5h1.5M1312 705.5h1.5" stroke="#ee82ee"/><path d="M1315.5 710V747M1314 716.5h1.5M1316 738.5h1.5" stroke="#ee82ee"/><path d="M1319.5 703V717M1318 715.5h1.5M1320 704.5h1.5" stroke="#ee82ee"/><path d="M1323.5 681V710M1322 689.5h1.5M1324 684.5h1.5" stroke="#ee82ee"/><path d="M1327.5 701V727M1326 724.5h1.5M1328 716.5h1.5" stroke="#00e000"/><path d="M1331.5 702V751M1330 718.5h1.5M1332 746.5h1.5" stroke="#ee82ee"/><path d="M1335.5 701V727M1334 708.5h1.5M1336 712.5h1.5" stroke="#ee82ee"/><path d="M1339.5 697V719M1338 703.5h1.5M1340 701.5h1.5" stroke="#ee82ee"/><path d="M1343.5 680V720M1342 701.5h1.5M1344 695.5h1.5" stroke="#ee82ee"/><path d="M1347.5 677V694M1346 680.5h1.5M1348 682.5h1.5" stroke="#ee82ee"/><path d="M1351.5 675V701M1350 677.5h1.5M1352 682.5h1.5" stroke="#ee82ee"/><path d="M1355.5 688V708M1354 695.5h1.5M1356 703.5h1.5" stroke="#ee82ee"/><path d="M1359.5 662V693M1358 676.5h1.5M1360 666.5h1.5" stroke="#ee82ee"/><path d="M1363.5 683V714M1362 702.5h1.5M1364 689.5h1.5" stroke="#ee82ee"/><path d="M1367.5 687V710M1366 696.5h1.5M1368 702.5h1.5" stroke="#ee82ee"/><path d="M1371.5 673V698M1370 681.5h1.5M1372 690.5h1.5" stroke="#ee82ee"/><path d="M1375.5 658V685M1374 667.5h1.5M1376 664.5h1.5" stroke="#ee82ee"/><path d="M1379.5 661V687M1378 684.5h1.5M1380 684.5h1.5" stroke="#ee82ee"/><path d="M1383.5 670V684M1382 676.5h1.5M1384 680.5h1.5" stroke="#ee82ee"/><path d="M1387.5 686V714M1386 690.5h1.5M1388 712.5h1.5" stroke="#ee82ee"/><path d="M1391.5 673V702M1390 684.5h1.5M1392 674.5h1.5" stroke="#ee82ee"/><path d="M1395.5 670V695M1394 677.5h1.5M1396 681.5h1.5" stroke="#ee82ee"/><path d="M1399.5 688V705M1398 688.5h1.5M1400 703.5h1.5" stroke="#ee82ee"/><path d="M1403.5 695V712M1402 710.5h1.5M1404 708.5h1.5" stroke="#ee82ee"/><path d="M1407.5 671V705M1406 674.5h1.5M1408 703.5h1.5" stroke="#ee82ee"/><path d="M1411.5 677V721M1410 697.5h1.5M1412 680.5h1.5" stroke="#ee82ee"/><path d="M1415.5 698V726M1414 699.5h1.5M1416 717.5h1.5" stroke="#ee82ee"/><path d="M1419.5 707V732M1418 713.5h1.5M1420 708.5h1.5" stroke="#ee82ee"/><path d="M1423.5 694V714M1422 708.5h1.5M1424 699.5h1.5" stroke="#ee82ee"/><path d="M1427.5 690V716M1426 713.5h1.5M1428 693.5h1.5" stroke="#ee82ee"/><path d="M1431.5 701V732M1430 721.5h1.5M1432 719.5h1.5" stroke="#ee82ee"/><path d="M1435.5 690V732M1434 699.5h1.5M1436 693.5h1.5" stroke="#ee82ee"/><path d="M1439.5 700V729M1438 714.5h1.5M1440 710.5h1.5" stroke="#ee82ee"/><path d="M1443.5 701V713M1442 710.5h1.5M1444 713.5h1.5" stroke="#ee82ee"/><path d="M1447.5 712V733M1446 712.5h1.5M1448 731.5h1.5" stroke="#ee82ee"/><path d="M1451.5 705V744M1450 710.5h1.5M1452 706.5h1.5" stroke="#ee82ee"/><path d="M1455.5 704V736M1454 733.5h1.5M1456 709.5h1.5" stroke="#ee82ee"/><path d="M1459.5 707V746M1458 720.5h1.5M1460 722.5h1.5" stroke="#ee82ee"/><path d="M1463.5 708V752M1462 744.5h1.5M1464 739.5h1.5" stroke="#ee82ee"/><path d="M1467.5 704V737M1466 724.5h1.5M1468 707.5h1.5" stroke="#ee82ee"/><path d="M1471.5 710V729M1470 718.5h1.5M1472 714.5h1.5" stroke="#00e000"/><path d="M1475.5 712V736M1474 719.5h1.5M1476 728.5h1.5" stroke="#ee82ee"/><path d="M1479.5 697V721M1478 719.5h1.5M1480 701.5h1.5" stroke="#ee82ee"/><path d="M1483.5 685V716M1482 695.5h1.5M1484 700.5h1.5" stroke="#ee82ee"/><path d="M1487.5 690V738M1486 729.5h1.5M1488 692.5h1.5" stroke="#ee82ee"/><path d="M1491.5 687V717M1490 707.5h1.5M1492 696.5h1.5" stroke="#ee82ee"/><path d="M1495.5 674V703M1494 676.5h1.5M1496 693.5h1.5" stroke="#ee82ee"/><path d="M1499.5 681V711M1498 684.5h1.5M1500 686.5h1.5" stroke="#ee82ee"/><path d="M1503.5 694V717M1502 706.5h1.5M1504 700.5h1.5" stroke="#ee82ee"/><path d="M1507.5 684V708M1506 698.5h1.5M1508 686.5h1.5" stroke="#ee82ee"/><path d="M1511.5 691V709M1510 705.5h1.5M1512 693.5h1.5" stroke="#ee82ee"/><path d="M1515.5 696V718M1514 718.5h1.5M1516 709.5h1.5" stroke="#ee82ee"/><path d="M1519.5 693V725M1518 712.5h1.5M1520 700.5h1.5" stroke="#00e000"/><path d="M1523.5 682V708M1522 697.5h1.5M1524 706.5h1.5" stroke="#ee82ee"/><path d="M1527.5 704V726M1526 722.5h1.5M1528 707.5h1.5" stroke="#ee82ee"/><path d="M1531.5 685V731M1530 710.5h1.5M1532 722.5h1.5" stroke="#ee82ee"/><path d="M1535.5 676V708M1534 703.5h1.5M1536 695.5h1.5" stroke="#ee82ee"/><path d="M1539.5 691V701M1538 694.5h1.5M1540 698.5h1.5" stroke="#ee82ee"/><path d="M1543.5 700V723M1542 721.5h1.5M1544 700.5h1.5" stroke="#ee82ee"/><path d="M1547.5 698V714M1546 701.5h1.5M1548 711.5h1.5" stroke="#00e000"/><path d="M1551.5 703V720M1550 718.5h1.5M1552 713.5h1.5" stroke="#ee82ee"/><path d="M1555.5 693V706M1554 696.5h1.5M1556 698.5h1.5" stroke="#00e000"/><path d="M1559.5 699V730M1558 699.5h1.5M1560 713.5h1.5" stroke="#ee82ee"/><path d="M1563.5 715V724M1562 719.5h1.5M1564 717.5h1.5" stroke="#ee82ee"/><path d="M1567.5 704V742M1566 737.5h1.5M1568 734.5h1.5" stroke="#ee82ee"/><path d="M1571.5 705V725M1570 724.5h1.5M1572 719.5h1.5" stroke="#ee82ee"/><path d="M1575.5 701V729M1574 717.5h1.5M1576 712.5h1.5" stroke="#ee82ee"/><path d="M1579.5 706V722M1578 710.5h1.5M1580 710.5h1.5" stroke="#ee82ee"/><path d="M1583.5 716V725M1582 721.5h1.5M1584 719.5h1.5" stroke="#ee82ee"/><path d="M1587.5 718V730M1586 730.5h1.5M1588 722.5h1.5" stroke="#ee82ee"/><path d="M1591.5 725V743M1590 731.5h1.5M1592 739.5h1.5" stroke="#ee82ee"/><path d="M1595.5 717V738M1594 722.5h1.5M1596 718.5h1.5" stroke="#ee82ee"/><path d="M1599.5 724V744M1598 736.5h1.5M1600 741.5h1.5" stroke="#ee82ee"/><path d="M1603.5 734V752M1602 749.5h1.5M1604 750.5h1.5" stroke="#ee82ee"/><path d="M1607.5 732V743M1606 742.5h1.5M1608 735.5h1.5" stroke="#ee82ee"/><path d="M1611.5 728V750M1610 730.5h1.5M1612 737.5h1.5" stroke="#ee82ee"/><path d="M1615.5 725V740M1614 732.5h1.5M1616 726.5h1.5" stroke="#ee82ee"/><path d="M1619.5 726V762M1618 730.5h1.5M1620 732.5h1.5" stroke="#ee82ee"/><path d="M1623.5 730V744M1622 738.5h1.5M1624 737.5h1.5" stroke="#ee82ee"/><path d="M1627.5 742V757M1626 753.5h1.5M1628 753.5h1.5" stroke="#ee82ee"/><path d="M1631.5 736V762M1630 760.5h1.5M1632 740.5h1.5" stroke="#ee82ee"/><path d="M1635.5 735V757M1634 740.5h1.5M1636 751.5h1.5" stroke="#ee82ee"/><path d="M1639.5 733V756M1638 755.5h1.5M1640 741.5h1.5" stroke="#ee82ee"/><path d="M1643.5 747V775M1642 769.5h1.5M1644 754.5h1.5" stroke="#00e000"/><path d="M1647.5 760V794M1646 771.5h1.5M1648 791.5h1.5" stroke="#ee82ee"/><path d="M1651.5 746V771M1650 747.5h1.5M1652 760.5h1.5" stroke="#ee82ee"/><path d="M1655.5 753V791M1654 763.5h1.5M1656 770.5h1.5" stroke="#ee82ee"/><path d="M1659.5 762V781M1658 766.5h1.5M1660 773.5h1.5" stroke="#ee82ee"/><path d="M1663.5 753V780M1662 761.5h1.5M1664 762.5h1.5" stroke="#ee82ee"/><path d="M1667.5 759V778M1666 770.5h1.5M1668 775.5h1.5" stroke="#ee82ee"/><path d="M1671.5 754V776M1670 773.5h1.5M1672 775.5h1.5" stroke="#ee82ee"/><path d="M1675.5 767V793M1674 786.5h1.5M1676 770.5h1.5" stroke="#ee82ee"/><path d="M1679.5 757V773M1678 771.5h1.5M1680 772.5h1.5" stroke="#ee82ee"/><path d="M1683.5 760V791M1682 773.5h1.5M1684 763.5h1.5" stroke="#ee82ee"/><path d="M1687.5 750V773M1686 753.5h1.5M1688 760.5h1.5" stroke="#ee82ee"/><path d="M1691.5 757V775M1690 763.5h1.5M1692 766.5h1.5" stroke="#ee82ee"/><path d="M1695.5 776V791M1694 780.5h1.5M1696 779.5h1.5" stroke="#ee82ee"/><path d="M1699.5 769V778M1698 772.5h1.5M1700 769.5h1.5" stroke="#ee82ee"/><path d="M1703.5 768V790M1702 787.5h1.5M1704 784.5h1.5" stroke="#ee82ee"/><path d="M1707.5 765V780M1706 771.5h1.5M1708 767.5h1.5" stroke="#ee82ee"/><path d="M1711.5 778V792M1710 784.5h1.5M1712 782.5h1.5" stroke="#ee82ee"/><path d="M1715.5 761V779M1714 774.5h1.5M1716 767.5h1.5" stroke="#00e000"/><path d="M1719.5 763V797M1718 780.5h1.5M1720 783.5h1.5" stroke="#ee82ee"/><path d="M1723.5 773V792M1722 780.5h1.5M1724 783.5h1.5" stroke="#ee82ee"/><path d="M1727.5 755V777M1726 769.5h1.5M1728 761.5h1.5" stroke="#ee82ee"/><path d="M1731.5 760V785M1730 764.5h1.5M1732 783.5h1.5" stroke="#ee82ee"/><path d="M1735.5 745V765M1734 761.5h1.5M1736 754.5h1.5" stroke="#ee82ee"/><path d="M1739.5 738V775M1738 768.5h1.5M1740 742.5h1.5" stroke="#ee82ee"/><path d="M1743.5 735V743M1742 739.5h1.5M1744 736.5h1.5" stroke="#ee82ee"/><path d="M1747.5 736V748M1746 745.5h1.5M1748 738.5h1.5" stroke="#ee82ee"/><path d="M1751.5 736V748M1750 741.5h1.5M1752 736.5h1.5" stroke="#ee82ee"/><path d="M1755.5 725V733M1754 727.5h1.5M1756 727.5h1.5" stroke="#ee82ee"/><path d="M1759.5 718V746M1758 740.5h1.5M1760 735.5h1.5" stroke="#ee82ee"/><path d="M1763.5 712V733M1762 721.5h1.5M1764 726.5h1.5" stroke="#ee82ee"/><path d="M1767.5 713V739M1766 738.5h1.5M1768 731.5h1.5" stroke="#ee82ee"/><path d="M1771.5 684V726M1770 705.5h1.5M1772 722.5h1.5" stroke="#ee82ee"/><path d="M1775.5 722V740M1774 730.5h1.5M1776 731.5h1.5" stroke="#ee82ee"/><path d="M1779.5 720V742M1778 736.5h1.5M1780 729.5h1.5" stroke="#ee82ee"/><path d="M1783.5 698V724M1782 704.5h1.5M1784 700.5h1.5" stroke="#ee82ee"/><path d="M1787.5 724V735M1786 731.5h1.5M1788 732.5h1.5" stroke="#00e000"/><path d="M1791.5 718V737M1790 734.5h1.5M1792 735.5h1.5" stroke="#ee82ee"/><path d="M1795.5 689V729M1794 702.5h1.5M1796 699.5h1.5" stroke="#ee82ee"/><path d="M1799.5 724V757M1798 751.5h1.5M1800 752.5h1.5" stroke="#ee82ee"/><path d="M1803.5 718V730M1802 724.5h1.5M1804 725.5h1.5" stroke="#ee82ee"/><path d="M1807.5 714V738M1806 722.5h1.5M1808 727.5h1.5" stroke="#00e000"/><path d="M1811.5 723V749M1810 741.5h1.5M1812 744.5h1.5" stroke="#ee82ee"/><path d="M1815.5 736V773M1814 752.5h1.5M1816 759.5h1.5" stroke="#00e000"/><path d="M1819.5 727V760M1818 745.5h1.5M1820 753.5h1.5" stroke="#ee82ee"/><path d="M1823.5 753V788M1822 758.5h1.5M1824 785.5h1.5" stroke="#ee82ee"/></g><path d="M563.5 350V425M562 400.5h3M1299.5 725V772M1298 742.5h3" stroke="#00e000"/><path d="M320.5 213V273M471.5 237V275M475.5 236V263M479.5 253V294M515.5 330V387M471 252.5h-1.5M476 248.5h1.5M1019.5 590V683M1018 640.5h1.5M1755.5 677V770M1759.5 695V786M1767.5 689V722M1771.5 695V718M1775.5 707V728M1754 700.5h1.5M1760 730.5h1.5M1768 695.5h1.5M1203.5 662V740M1259.5 720V780M1258 760.5h1.5" stroke="#ee82ee"/><g stroke="#ee82ee" fill="none"><path d="M1828.5 775V794M1827 787.5h1.5M1829 782.5h1.5"/><path d="M1831.5 775V804M1830 792.5h1.5M1832 787.5h1.5"/><path d="M1835.5 799V827M1834 816.5h1.5M1836 811.5h1.5"/><path d="M1839.5 830V878M1838 857.5h1.5M1840 852.5h1.5"/><path d="M1843.5 866V936M1842 904.5h1.5M1844 899.5h1.5"/><path d="M1848.5 869V942M1847 908.5h1.5M1849 903.5h1.5"/><path d="M1851.5 870V910M1850 893.5h1.5M1852 888.5h1.5"/><path d="M1855.5 887V921M1854 907.5h1.5M1856 902.5h1.5"/><path d="M1859.5 889V919M1858 907.5h1.5M1860 902.5h1.5"/><path d="M1864.5 869V893M1863 884.5h1.5M1865 879.5h1.5"/><path d="M1867.5 871V888M1866 882.5h1.5M1868 877.5h1.5"/><path d="M1871.5 878V882M1870 883.5h1.5M1872 878.5h1.5"/></g><path d="M1875.5 875V882" stroke="#00e000"/><polyline points="242.0,194.0 251.0,188.5 279.0,188.5 295.0,162.6 314.0,160.0 320.0,170.0 329.0,177.0 344.0,198.0 358.0,224.0 370.0,228.0 400.0,228.3 423.0,227.4 435.0,237.6 444.4,236.7 453.7,238.5 463.0,256.0 470.0,259.0 487.0,257.0 498.0,284.0 505.5,284.8 514.8,292.0 529.6,299.6 548.0,302.4 563.4,328.0 581.5,321.0 597.0,283.7 607.5,280.0 623.0,250.0 633.4,229.0 643.8,213.7 667.0,212.4 675.0,232.0 685.0,255.0 700.0,268.8 720.0,280.0 735.0,268.8 750.0,270.0 767.5,313.8 777.5,322.5 797.5,336.0 817.5,337.5 835.0,341.0 867.5,342.5 882.5,357.5 895.0,358.8 912.5,368.8 922.5,395.0 935.0,402.5 950.0,425.0 960.0,440.0 978.0,458.0 994.0,488.0 1008.0,525.0 1021.0,553.0 1056.0,556.0 1086.0,548.0 1117.0,558.0 1145.0,532.0 1167.0,508.0 1187.0,508.0 1196.0,536.0 1207.0,615.0 1220.0,627.0 1232.0,622.0 1257.8,640.0 1263.7,654.8 1294.8,654.8 1303.7,662.0 1330.4,680.0 1339.3,686.0 1349.6,666.7 1360.0,659.0 1377.0,650.0 1400.0,650.0 1415.0,669.0 1435.0,672.0 1460.0,686.0 1479.0,686.0 1492.0,672.0 1517.0,664.0 1540.0,673.0 1543.0,678.5 1557.8,682.2 1572.6,685.0 1584.4,694.8 1594.8,708.0 1603.7,714.0 1611.0,720.7 1634.8,719.3 1642.2,729.0 1652.6,745.0 1658.5,747.4 1690.0,748.0 1700.4,752.6 1724.0,750.4 1733.0,745.2 1741.9,747.4 1752.2,748.1 1761.0,711.9 1773.0,692.6 1781.9,691.0 1808.5,691.0 1813.0,694.0 1829.3,731.0 1836.7,748.9 1847.0,799.3 1850.0,800.7 1855.5,804.0 1865.0,796.0 1876.0,798.0" fill="none" stroke="#7c7c7c" stroke-width="1"/><polyline points="240.0,235.0 251.0,228.0 277.0,227.0 284.0,222.0 295.0,203.0 310.0,207.0 316.0,209.0 327.0,227.0 344.0,259.0 358.0,298.0 364.0,304.0 370.0,301.0 400.0,301.5 418.5,299.6 435.0,310.0 455.5,306.0 464.8,321.0 487.0,324.6 494.4,338.5 503.7,362.6 514.8,385.7 533.3,376.5 548.0,376.5 563.4,400.4 579.0,398.0 607.5,361.5 620.4,335.6 643.8,291.5 667.0,290.2 675.0,299.0 700.0,350.0 715.0,343.8 727.5,342.5 737.5,331.0 750.0,331.0 762.5,367.5 775.0,400.0 787.5,415.0 805.0,407.5 840.0,402.5 867.5,405.0 882.5,420.0 900.0,422.5 915.0,417.5 925.0,445.0 940.0,485.0 960.0,517.5 963.0,508.0 987.0,544.0 1011.0,604.0 1025.0,654.0 1062.0,652.0 1083.0,649.0 1117.0,631.0 1145.0,601.0 1169.0,566.0 1187.0,566.0 1203.0,640.0 1213.3,702.0 1219.3,740.7 1229.6,764.4 1244.4,758.5 1254.8,757.0 1263.7,780.0 1294.8,780.0 1336.3,758.5 1346.7,736.3 1357.0,731.9 1377.0,721.0 1400.0,721.0 1420.0,742.0 1460.0,757.0 1479.0,757.0 1510.0,735.0 1540.0,728.9 1544.4,734.0 1562.2,730.4 1572.6,731.9 1587.4,739.3 1593.3,746.7 1602.2,751.0 1611.0,762.2 1634.8,761.5 1652.6,797.0 1658.5,797.8 1690.0,799.0 1699.0,804.4 1724.0,802.0 1733.0,794.8 1747.8,789.0 1755.0,780.0 1759.6,766.7 1771.5,752.6 1810.0,753.3 1818.9,766.7 1832.2,796.3 1838.0,817.0 1846.0,871.0 1853.7,926.7 1861.0,937.8 1870.0,939.6 1876.0,937.8" fill="none" stroke="#7c7c7c" stroke-width="1"/><polyline points="23,179 31,175 37,149" fill="none" stroke="#8c8c8c"/><polyline points="23,294 31,291 37,264" fill="none" stroke="#8c8c8c"/><path d="M24.5 203V240M27.5 167V209M31.5 144V173M35.5 144V164M28 178.5h-1.5M32 168.5h-1.5M36 152.5h-1.5" stroke="#ee82ee" fill="none"/><polyline points="23,236 30,233 33,223 37,204" fill="none" stroke="#1cb4f0" stroke-width="2.2"/><polyline points="240.0,215.0 242.0,215.0 250.0,209.7" fill="none" stroke="#1cb4f0" stroke-width="2.2" stroke-linejoin="round"/><polyline points="250.0,209.7 251.0,209.0 272.0,209.0" fill="none" stroke="#ff4e1a" stroke-width="2.2" stroke-linejoin="round"/><polyline points="272.0,209.0 279.0,207.0 295.0,183.0" fill="none" stroke="#1cb4f0" stroke-width="2.2" stroke-linejoin="round"/><polyline points="295.0,183.0 315.0,183.0 319.0,194.0 325.0,201.5 333.0,214.0 344.0,235.0 358.0,260.7 363.0,265.0" fill="none" stroke="#ff4e1a" stroke-width="2.2" stroke-linejoin="round"/><polyline points="363.0,265.0 411.0,264.4 415.0,263.0" fill="none" stroke="#1cb4f0" stroke-width="2.2" stroke-linejoin="round"/><polyline points="415.0,263.0 422.0,263.5 435.0,273.0 437.0,273.0" fill="none" stroke="#ff4e1a" stroke-width="2.2" stroke-linejoin="round"/><polyline points="437.0,273.0 452.0,272.8" fill="none" stroke="#1cb4f0" stroke-width="2.2" stroke-linejoin="round"/><polyline points="452.0,272.8 464.8,289.4 487.0,291.0 496.0,314.4 503.7,327.4 515.0,337.9" fill="none" stroke="#ff4e1a" stroke-width="2.2" stroke-linejoin="round"/><polyline points="515.0,337.9 515.7,338.5 547.0,338.5" fill="none" stroke="#1cb4f0" stroke-width="2.2" stroke-linejoin="round"/><polyline points="547.0,338.5 563.0,363.4" fill="none" stroke="#ff4e1a" stroke-width="2.2" stroke-linejoin="round"/><polyline points="563.0,363.4 563.4,364.0 566.0,359.0 581.5,359.0 586.7,351.0 597.0,328.0 607.5,322.6 615.0,302.0 625.6,278.5 643.8,254.0 647.7,250.5 663.0,250.5" fill="none" stroke="#1cb4f0" stroke-width="2.2" stroke-linejoin="round"/><polyline points="663.0,250.5 685.0,297.0 696.0,303.0 700.0,311.0 724.0,311.0" fill="none" stroke="#ff4e1a" stroke-width="2.2" stroke-linejoin="round"/><polyline points="724.0,311.0 736.0,300.0 747.0,300.0" fill="none" stroke="#1cb4f0" stroke-width="2.2" stroke-linejoin="round"/><polyline points="747.0,300.0 747.5,300.0 750.0,301.0 757.5,317.5 767.5,345.0 775.0,362.5 786.0,372.0 850.0,372.0 867.5,373.0 880.0,387.5 897.5,392.5 915.0,394.0 920.0,405.0 926.0,425.0 932.5,427.5 940.0,450.0 950.0,462.5 960.0,480.0 963.0,486.0 978.0,498.0 994.0,529.0 1011.0,570.0 1023.0,604.0 1056.0,604.0" fill="none" stroke="#ff4e1a" stroke-width="2.2" stroke-linejoin="round"/><polyline points="1056.0,604.0 1083.0,601.0 1090.0,596.0 1117.0,594.0 1131.0,580.0 1148.0,563.0 1169.0,537.0 1184.0,536.0" fill="none" stroke="#1cb4f0" stroke-width="2.2" stroke-linejoin="round"/><polyline points="1184.0,536.0 1189.0,539.0 1196.0,566.0 1201.0,590.0 1207.4,640.0 1217.8,684.4 1223.7,693.3 1255.6,693.3 1263.7,717.8 1264.0,717.8" fill="none" stroke="#ff4e1a" stroke-width="2.2" stroke-linejoin="round"/><polyline points="1264.0,717.8 1294.8,717.0 1295.0,717.1" fill="none" stroke="#1cb4f0" stroke-width="2.2" stroke-linejoin="round"/><polyline points="1295.0,717.1 1303.7,720.0 1331.9,720.0 1335.6,722.0 1336.0,722.0" fill="none" stroke="#ff4e1a" stroke-width="2.2" stroke-linejoin="round"/><polyline points="1336.0,722.0 1340.0,722.0 1348.0,702.0 1355.6,696.3 1365.0,695.0 1375.0,686.0 1396.0,685.0" fill="none" stroke="#1cb4f0" stroke-width="2.2" stroke-linejoin="round"/><polyline points="1396.0,685.0 1407.0,697.0 1420.0,707.0 1435.0,707.0 1445.0,714.0 1455.0,716.0 1460.0,720.0 1479.0,720.0" fill="none" stroke="#ff4e1a" stroke-width="2.2" stroke-linejoin="round"/><polyline points="1479.0,720.0 1492.0,710.0 1510.0,701.0 1535.0,700.0" fill="none" stroke="#1cb4f0" stroke-width="2.2" stroke-linejoin="round"/><polyline points="1535.0,700.0 1540.0,701.5 1543.0,706.0 1546.0,706.0" fill="none" stroke="#ff4e1a" stroke-width="2.2" stroke-linejoin="round"/><polyline points="1546.0,706.0 1547.4,706.0 1559.3,706.0 1560.0,706.1" fill="none" stroke="#1cb4f0" stroke-width="2.2" stroke-linejoin="round"/><polyline points="1560.0,706.1 1571.0,708.0 1586.0,717.8 1596.3,730.4 1606.7,737.8 1611.8,742.2 1612.0,742.1" fill="none" stroke="#ff4e1a" stroke-width="2.2" stroke-linejoin="round"/><polyline points="1612.0,742.1 1615.6,740.0 1631.9,740.0 1632.0,740.0" fill="none" stroke="#1cb4f0" stroke-width="2.2" stroke-linejoin="round"/><polyline points="1632.0,740.0 1634.8,740.7 1640.7,746.7 1652.6,770.4 1655.6,772.6 1686.7,772.6 1690.0,773.3 1699.6,777.8 1700.0,777.8" fill="none" stroke="#ff4e1a" stroke-width="2.2" stroke-linejoin="round"/><polyline points="1700.0,777.8 1723.3,777.0 1728.5,772.6 1736.0,769.6 1751.5,767.4 1758.0,747.4 1765.6,734.0 1772.2,723.0 1807.0,722.0 1808.0,722.5" fill="none" stroke="#1cb4f0" stroke-width="2.2" stroke-linejoin="round"/><polyline points="1808.0,722.5 1813.0,725.2 1823.3,743.0 1830.7,760.7 1836.7,778.5 1844.0,820.0 1848.0,847.0 1854.6,867.4 1877.0,867.4" fill="none" stroke="#ff4e1a" stroke-width="2.2" stroke-linejoin="round"/><path d="M253 149h4v7.5l2.5-2.8 1.3 1.3v2.5l-5.8 6.5-5.8-6.5v-2.5l1.3-1.3 2.5 2.8z" fill="#ff0000"/><path d="M301 132h4v7.5l2.5-2.8 1.3 1.3v2.5l-5.8 6.5-5.8-6.5v-2.5l1.3-1.3 2.5 2.8z" fill="#ff0000"/><path d="M653 201h4v7.5l2.5-2.8 1.3 1.3v2.5l-5.8 6.5-5.8-6.5v-2.5l1.3-1.3 2.5 2.8z" fill="#ff0000"/><path d="M838 281h4v7.5l2.5-2.8 1.3 1.3v2.5l-5.8 6.5-5.8-6.5v-2.5l1.3-1.3 2.5 2.8z" fill="#ff0000"/><path d="M1170 472h4v7.5l2.5-2.8 1.3 1.3v2.5l-5.8 6.5-5.8-6.5v-2.5l1.3-1.3 2.5 2.8z" fill="#ff0000"/><path d="M1385 609h4v7.5l2.5-2.8 1.3 1.3v2.5l-5.8 6.5-5.8-6.5v-2.5l1.3-1.3 2.5 2.8z" fill="#ff0000"/><path d="M1518 643h4v7.5l2.5-2.8 1.3 1.3v2.5l-5.8 6.5-5.8-6.5v-2.5l1.3-1.3 2.5 2.8z" fill="#ff0000"/><path d="M261 286h4v-7.5l2.5 2.8 1.3-1.3v-2.5l-5.8-6.5-5.8 6.5v2.5l1.3 1.3 2.5-2.8z" fill="#ff0000"/><path d="M565 437h4v-7.5l2.5 2.8 1.3-1.3v-2.5l-5.8-6.5-5.8 6.5v2.5l1.3 1.3 2.5-2.8z" fill="#ff0000"/><path d="M825 457h4v-7.5l2.5 2.8 1.3-1.3v-2.5l-5.8-6.5-5.8 6.5v2.5l1.3 1.3 2.5-2.8z" fill="#ff0000"/><path d="M1028 661h4v-7.5l2.5 2.8 1.3-1.3v-2.5l-5.8-6.5-5.8 6.5v2.5l1.3 1.3 2.5-2.8z" fill="#ff0000"/><path d="M1265 773h4v-7.5l2.5 2.8 1.3-1.3v-2.5l-5.8-6.5-5.8 6.5v2.5l1.3 1.3 2.5-2.8z" fill="#ff0000"/><path d="M1469 802h4v-7.5l2.5 2.8 1.3-1.3v-2.5l-5.8-6.5-5.8 6.5v2.5l1.3 1.3 2.5-2.8z" fill="#ff0000"/><path d="M1664 827V813h5.7V827zM1666.8 802.5L1676.7 813.3V819L1666.8 809.5L1657 819V813.3z" fill="#00ff00"/><path d="M1666.8 807L1672.5 813v4.5l-4.2-3.5V821h-3v-7l-4.2 3.5V813z" fill="#ff0000"/><path d="M1784.7 664.2h5.3V678h-5.3zM1787.3 686.7L1777.5 677.5V670.8L1787.3 680.8 1796.7 670.8V677.5z" fill="#00ff00"/><path d="M1787.3 683.5L1781.8 678v-4.5l4 3.5V670.5h3v6.5l4-3.5V678z" fill="#ff0000"/><line x1="1167.5" y1="89" x2="1167.5" y2="1015" stroke="#ffffff" stroke-width="1" stroke-dasharray="3 3"/><path d="M1876 920H1832a2.5 2.5 0 0 0 0 5H1876z" fill="#ffffff"/><line x1="1847" y1="931.5" x2="1877" y2="931.5" stroke="#ffffff" stroke-width="1"/></svg>
<svg class="a" style="left:26px;top:94.5px" width="8" height="6"><path d="M0 0h7.5l-3.75 4.5z" fill="#ee82ee"/></svg><div class="t" style="left:38px;top:91.90px;font-size:10px;color:#ee82ee;letter-spacing:-0.3px">XAGUSD,H1</div><div class="a" style="left:57px;top:102px;width:6px;height:2px;background:#00ff00"></div><svg class="a" style="left:1684px;top:88px" width="10" height="6"><path d="M0 0h9l-4.5 5z" fill="#909090"/></svg><div class="t" style="left:1772.5px;top:93.43px;font-size:9.8px;color:#ee82ee;letter-spacing:-0.2px">Trade Assistant MT4</div><svg class="a" style="left:1859px;top:91px" width="13" height="13"><circle cx="6.5" cy="6.5" r="5.5" fill="none" stroke="#ee82ee" stroke-width="1"/><circle cx="4.6" cy="5" r=".8" fill="#ee82ee"/><circle cx="8.4" cy="5" r=".8" fill="#ee82ee"/><path d="M3.8 9.6q2.7-2.4 5.4 0" fill="none" stroke="#ee82ee"/></svg><div class="t" style="left:1817px;top:109.08px;font-size:12px;color:#c0c0c0;font-family:Liberation Mono,monospace;letter-spacing:-0.3px">mon&nbsp;mon</div><div class="t" style="left:1531px;top:95px;font-size:34px;font-weight:bold;color:#00ffff;-webkit-text-stroke:1.1px #00ffff;transform:scaleX(0.745);transform-origin:0 0;letter-spacing:0px">auto off / reset / manage</div><div class="t" style="left:29.5px;top:658.37px;font-size:10.2px;color:#e8b8f0;letter-spacing:-0.42px">#911359071 tp</div><div class="t" style="left:29.5px;top:788.37px;font-size:10.2px;color:#e8b8f0;letter-spacing:-0.42px">#911359071 buy 1.10</div><div class="t" style="left:29.5px;top:854.37px;font-size:10.2px;color:#9a80a8;letter-spacing:-0.42px">#911359071 sl</div><div class="t" style="left:32.5px;top:883.08px;font-size:12px;color:#f0a30a;">0d 09:17:09</div><div class="t" style="left:106px;top:883.08px;font-size:12px;color:#f0a30a;">USD: Existing Home Sales</div><div class="t" style="left:32.5px;top:900.08px;font-size:12px;color:#f0a30a;">1d 07:47:09</div><div class="t" style="left:106px;top:900.08px;font-size:12px;color:#f0a30a;">USD: Philly Fed Manufacturing Index</div><div class="t" style="left:32.5px;top:917.08px;font-size:12px;color:#f0a30a;">1d 07:47:09</div><div class="t" style="left:106px;top:917.08px;font-size:12px;color:#f0a30a;">USD: Unemployment Claims</div><div class="t" style="left:32.5px;top:934.08px;font-size:12px;color:#ff0000;">2d 09:02:09</div><div class="t" style="left:106px;top:934.08px;font-size:12px;color:#ff0000;">USD: Flash Services PMI</div><div class="t" style="left:32.5px;top:951.08px;font-size:12px;color:#f0a30a;">2d 09:02:09</div><div class="t" style="left:106px;top:951.08px;font-size:12px;color:#f0a30a;">USD: Flash Manufacturing PMI</div><div class="t" style="left:36px;top:944.74px;font-size:11px;color:#4a4a4a;font-family:Liberation Serif,serif;letter-spacing:0.3px">&#212;08i&#245;6 &#245;&#245;&#245;&#245;&#245;-&#245;&#245; FXSA.ORG</div><div class="a" style="left:950px;top:799px;width:122px;height:13px;background:#009a00;border:1px solid #b8b8d8;border-radius:2px"></div><div class="a" style="left:1073px;top:799px;width:13px;height:13px;background:#009a00;border:1px solid #b8b8d8;border-radius:2px"></div><div class="t" style="left:955px;top:799.77px;font-size:10.8px;color:#ffffe8;letter-spacing:0px">Buy <span style="color:#e0d040">|</span> 1.10 <span style="color:#e0d040">|</span> -33.00 USD</div><div class="t" style="left:1075px;top:799.90px;font-size:10px;color:#ffffe8;">...</div><div class="t" style="left:801px;top:401.12px;font-size:5.5px;color:#d8d8d8;">H4</div><div class="t" style="left:850px;top:401.12px;font-size:5.5px;color:#8a8a8a;">Long</div><div class="t" style="left:801px;top:412.12px;font-size:5.5px;color:#d8d8d8;">H1</div><div class="t" style="left:850px;top:412.12px;font-size:5.5px;color:#8a8a8a;">Long</div><div class="t" style="left:801px;top:423.12px;font-size:5.5px;color:#d8d8d8;">M15</div><div class="t" style="left:850px;top:423.12px;font-size:5.5px;color:#8a8a8a;">Long</div>
<div class="a" style="left:39px;top:105px;width:202px;height:263px;background:#1e90ff"></div><div class="t" style="left:42px;top:107.77px;font-size:10.8px;color:#3a3a3a;">Trade Assistant MT4 9.4</div><svg class="a" style="left:188px;top:108px" width="12" height="10"><path d="M0.5 2.5h3l1-2h3l1 2h3v7h-11z" fill="#c8c8c8"/><circle cx="6" cy="5.8" r="2.2" fill="#1e90ff"/><circle cx="6" cy="5.8" r="1" fill="#c8c8c8"/></svg><div class="t" style="left:229px;top:107.77px;font-size:10.8px;color:#3a3a3a;">X</div><div class="a" style="left:39px;top:122px;width:202px;height:12px;background:#1e90ff;border-top:1px solid #000;border-bottom:1px solid #000"></div><div class="a" style="left:91px;top:122px;width:1px;height:12px;background:#000"></div><div class="a" style="left:103px;top:122px;width:1px;height:12px;background:#000"></div><div class="a" style="left:115px;top:122px;width:1px;height:12px;background:#000"></div><div class="a" style="left:133px;top:122px;width:1px;height:12px;background:#000"></div><div class="a" style="left:199px;top:122px;width:1px;height:12px;background:#000"></div><div class="t" style="left:42px;top:122.74px;font-size:11px;color:#fff;">XAGUSD</div><div class="t" style="left:85px;top:125.04px;font-size:6px;color:#9ab;">&#9662;</div><div class="t" style="left:95px;top:123.40px;font-size:10px;color:#fff;">&lt;</div><div class="t" style="left:107px;top:123.40px;font-size:10px;color:#fff;">&gt;</div><svg class="a" style="left:117px;top:124px" width="15" height="9"><path d="M0.5 8.5v-7h4l1 1h6v2M0.5 8.5l2-4h12l-2 4z" fill="none" stroke="#fff" stroke-width="1"/></svg><div class="t" style="left:200px;top:122.74px;font-size:11px;color:#fff;letter-spacing:-0.2px">06:43:32</div><div class="a" style="left:41px;top:140px;width:51px;height:15px;background:#ffff00;border:1px solid #3a3a5a;border-radius:1px;color:#000;font-size:11px;line-height:13px;text-align:center;white-space:nowrap;padding-top:1px">Trade</div><div class="a" style="left:93px;top:140px;width:50px;height:15px;background:#0000ff;border:1px solid #3a3a5a;border-radius:1px;color:#00003a;font-size:11px;line-height:13px;text-align:center;white-space:nowrap;padding-top:1px">Close</div><div class="a" style="left:144px;top:140px;width:50px;height:15px;background:#0000ff;border:1px solid #3a3a5a;border-radius:1px;color:#00003a;font-size:11px;line-height:13px;text-align:center;white-space:nowrap;padding-top:1px">Settings</div><div class="a" style="left:195px;top:140px;width:44px;height:15px;background:#0000ff;border:1px solid #3a3a5a;border-radius:1px;color:#00003a;font-size:11px;line-height:13px;text-align:center;white-space:nowrap;padding-top:1px">Info</div><div class="t" style="left:44.5px;top:160.82px;font-size:10.5px;color:#fff;">Sp: 2&nbsp; Com: 0.00</div><svg class="a" style="left:180px;top:158px" width="12" height="10"><path d="M0.5 5q5.5-6 11 0q-5.5 6-11 0z" fill="none" stroke="#c8c8c8" stroke-width="1.3"/><circle cx="6" cy="5" r="1.8" fill="#c8c8c8"/></svg><svg class="a" style="left:203px;top:158px" width="11" height="11"><rect x="0.5" y="1.5" width="10" height="9" fill="none" stroke="#c8c8c8" stroke-width="1.2"/><rect x="0.5" y="1.5" width="10" height="2" fill="#c8c8c8"/><rect x="5" y="6" width="3" height="3" fill="#c8c8c8"/><path d="M3 0v2M8 0v2" stroke="#c8c8c8"/></svg><svg class="a" style="left:224px;top:157px" width="11" height="12"><path d="M5.5 1q-4 0-4 5v3h-1v1h10v-1h-1v-3q0-5-4-5z" fill="#c8c8c8"/><circle cx="5.5" cy="11" r="1" fill="#c8c8c8"/><circle cx="5.5" cy="6" r="1.3" fill="#1e90ff"/></svg><div class="a" style="left:40px;top:175px;width:200px;height:1px;background:#000"></div><svg class="a" style="left:43px;top:178px" width="54" height="12"><path d="M1 11V8h52v3" fill="none" stroke="#000" stroke-width="1"/><rect x="17" y="1.5" width="17" height="9" fill="#ffff00" stroke="#000" stroke-width="0.8"/><text x="25.5" y="9.5" font-size="9" text-anchor="middle" fill="#000" font-family="Liberation Sans">RR</text></svg><div class="t" style="left:43.5px;top:188.74px;font-size:11px;color:#fff;letter-spacing:-0.3px">R/TP</div><div class="t" style="left:71px;top:188.74px;font-size:11px;color:#fff;letter-spacing:-0.3px">R/SL</div><div class="t" style="left:115px;top:188.74px;font-size:11px;color:#fff;letter-spacing:-0.1px">Risk %Ba</div><div class="a" style="left:180px;top:184px;width:58px;height:13px;background:#ffff00;border:1px solid #3a3a5a;border-radius:1px;color:#000;font-size:11px;line-height:11px;text-align:center;white-space:nowrap;">Lot calc</div><div class="a" style="left:41px;top:201px;width:26px;height:14px;background:#f4f4f4;border:1px solid #9a9a9a;border-radius:1px"></div><div class="t" style="left:11.5px;width:80px;text-align:center;top:202.5px;font-size:11px;line-height:12px;color:#222">2.0</div><svg class="a" style="left:59px;top:203px" width="6" height="10"><path d="M1 3.5l2-2 2 2M1 6.5l2 2 2-2" fill="none" stroke="#9a9a9a" stroke-width="0.8"/></svg><div class="a" style="left:72px;top:201px;width:26px;height:14px;background:#f4f4f4;border:1px solid #9a9a9a;border-radius:1px"></div><div class="t" style="left:43px;width:80px;text-align:center;top:202.5px;font-size:11px;line-height:12px;color:#222">1.0</div><svg class="a" style="left:90px;top:203px" width="6" height="10"><path d="M1 3.5l2-2 2 2M1 6.5l2 2 2-2" fill="none" stroke="#9a9a9a" stroke-width="0.8"/></svg><div class="a" style="left:102px;top:201px;width:10px;height:14px;background:#0000ff;border:1px solid #3a3a5a;border-radius:1px;color:#000;font-size:11px;line-height:12px;text-align:center;white-space:nowrap;">-</div><div class="a" style="left:113px;top:201px;width:53px;height:14px;background:#f4f4f4;border:1px solid #9a9a9a;border-radius:1px"></div><div class="t" style="left:98px;width:80px;text-align:center;top:202.5px;font-size:11px;line-height:12px;color:#222">2.00</div><div class="a" style="left:166px;top:201px;width:10px;height:14px;background:#0000ff;border:1px solid #3a3a5a;border-radius:1px;color:#000;font-size:11px;line-height:12px;text-align:center;white-space:nowrap;">+</div><div class="a" style="left:180px;top:201px;width:58px;height:14px;background:#0000ff;border:1px solid #3a3a5a;border-radius:1px;color:#00003a;font-size:11px;line-height:12px;text-align:center;white-space:nowrap;">Lines</div><div class="a" style="left:40px;top:220px;width:200px;height:1px;background:#000"></div><div class="t" style="left:44.5px;top:227.27px;font-size:10.8px;color:#fff;">Comment</div><div class="a" style="left:41px;top:240px;width:197px;height:15px;background:#f4f4f4;border:1px solid #9a9a9a;border-radius:1px;font-size:10.8px;line-height:13px;text-align:center;color:#222">Comment</div><div class="a" style="left:41px;top:261px;width:73px;height:15px;background:#d8d8d8;border:1px solid #9a9a9a;border-radius:1px"></div><div class="t" style="left:43px;top:262.74px;font-size:11px;color:#8a8a8a;">Lot</div><div class="t" style="left:36px;width:80px;text-align:center;top:262.5px;font-size:11px;line-height:12px;color:#222">1.10</div><svg class="a" style="left:106px;top:263px" width="6" height="10"><path d="M1 3.5l2-2 2 2M1 6.5l2 2 2-2" fill="none" stroke="#9a9a9a" stroke-width="0.8"/></svg><div class="t" style="left:125px;top:263.74px;font-size:11px;color:#fff;">Entry:</div><div class="a" style="left:164px;top:261px;width:74px;height:15px;background:#f4f4f4;border:1px solid #9a9a9a;border-radius:1px"></div><div class="t" style="left:160px;width:80px;text-align:center;top:262.5px;font-size:11px;line-height:12px;color:#222">200</div><svg class="a" style="left:230px;top:263px" width="6" height="10"><path d="M1 3.5l2-2 2 2M1 6.5l2 2 2-2" fill="none" stroke="#9a9a9a" stroke-width="0.8"/></svg><div class="a" style="left:41px;top:282px;width:73px;height:15px;background:#f4f4f4;border:1px solid #9a9a9a;border-radius:1px"></div><div class="t" style="left:43px;top:283.74px;font-size:11px;color:#8a8a8a;">tp</div><div class="t" style="left:36px;width:80px;text-align:center;top:283.5px;font-size:11px;line-height:12px;color:#222">400</div><svg class="a" style="left:106px;top:284px" width="6" height="10"><path d="M1 3.5l2-2 2 2M1 6.5l2 2 2-2" fill="none" stroke="#9a9a9a" stroke-width="0.8"/></svg><div class="a" style="left:119px;top:282px;width:41px;height:15px;background:#0000ff;border:1px solid #3a3a5a;border-radius:1px;color:#00003a;font-size:11px;line-height:13px;text-align:center;white-space:nowrap;">Price</div><div class="a" style="left:164px;top:282px;width:74px;height:15px;background:#f4f4f4;border:1px solid #9a9a9a;border-radius:1px"></div><div class="t" style="left:166px;top:283.74px;font-size:11px;color:#8a8a8a;">sl</div><div class="t" style="left:160px;width:80px;text-align:center;top:283.5px;font-size:11px;line-height:12px;color:#222">31</div><svg class="a" style="left:230px;top:284px" width="6" height="10"><path d="M1 3.5l2-2 2 2M1 6.5l2 2 2-2" fill="none" stroke="#9a9a9a" stroke-width="0.8"/></svg><div class="a" style="left:41px;top:308px;width:86px;height:17px;background:#ff0000;border:1px solid #3a3a5a;border-radius:1px;color:#000;font-size:11px;line-height:15px;text-align:center;white-space:nowrap;">Sell</div><div class="a" style="left:131px;top:308px;width:16px;height:16px;background:#0000ff;border:1px solid #3a3a5a;border-radius:1px"></div><div class="a" style="left:152px;top:308px;width:86px;height:17px;background:#32cd32;border:1px solid #3a3a5a;border-radius:1px;color:#000;font-size:11px;line-height:15px;text-align:center;white-space:nowrap;">Buy</div><div class="a" style="left:41px;top:328px;width:98px;height:17px;background:#ff0000;border:1px solid #3a3a5a;border-radius:1px;color:#000;font-size:11px;line-height:15px;text-align:center;white-space:nowrap;">Sell Stop</div><div class="a" style="left:140px;top:328px;width:98px;height:17px;background:#32cd32;border:1px solid #3a3a5a;border-radius:1px;color:#000;font-size:11px;line-height:15px;text-align:center;white-space:nowrap;">Buy Stop</div><div class="a" style="left:41px;top:348px;width:98px;height:17px;background:#ff0000;border:1px solid #3a3a5a;border-radius:1px;color:#000;font-size:11px;line-height:15px;text-align:center;white-space:nowrap;">Sell Limit</div><div class="a" style="left:140px;top:348px;width:98px;height:17px;background:#32cd32;border:1px solid #3a3a5a;border-radius:1px;color:#000;font-size:11px;line-height:15px;text-align:center;white-space:nowrap;">Buy Limit</div>
<div class="a" style="left:1877px;top:121px;width:4px;height:1px;background:#ee82ee"></div><div class="t" style="left:1882px;top:116.85px;font-size:10.3px;color:#ee82ee;letter-spacing:-0.45px">22.05</div><div class="a" style="left:1877px;top:163px;width:4px;height:1px;background:#ee82ee"></div><div class="t" style="left:1882px;top:158.80px;font-size:10.3px;color:#ee82ee;letter-spacing:-0.45px">21.85</div><div class="a" style="left:1877px;top:205px;width:4px;height:1px;background:#ee82ee"></div><div class="t" style="left:1882px;top:200.75px;font-size:10.3px;color:#ee82ee;letter-spacing:-0.45px">21.65</div><div class="a" style="left:1877px;top:247px;width:4px;height:1px;background:#ee82ee"></div><div class="t" style="left:1882px;top:242.70px;font-size:10.3px;color:#ee82ee;letter-spacing:-0.45px">21.45</div><div class="a" style="left:1877px;top:289px;width:4px;height:1px;background:#ee82ee"></div><div class="t" style="left:1882px;top:284.65px;font-size:10.3px;color:#ee82ee;letter-spacing:-0.45px">21.25</div><div class="a" style="left:1877px;top:331px;width:4px;height:1px;background:#ee82ee"></div><div class="t" style="left:1882px;top:326.60px;font-size:10.3px;color:#ee82ee;letter-spacing:-0.45px">21.05</div><div class="a" style="left:1877px;top:373px;width:4px;height:1px;background:#ee82ee"></div><div class="t" style="left:1882px;top:368.55px;font-size:10.3px;color:#ee82ee;letter-spacing:-0.45px">20.85</div><div class="a" style="left:1877px;top:415px;width:4px;height:1px;background:#ee82ee"></div><div class="t" style="left:1882px;top:410.50px;font-size:10.3px;color:#ee82ee;letter-spacing:-0.45px">20.65</div><div class="a" style="left:1877px;top:457px;width:4px;height:1px;background:#ee82ee"></div><div class="t" style="left:1882px;top:452.45px;font-size:10.3px;color:#ee82ee;letter-spacing:-0.45px">20.45</div><div class="a" style="left:1877px;top:499px;width:4px;height:1px;background:#ee82ee"></div><div class="t" style="left:1882px;top:494.40px;font-size:10.3px;color:#ee82ee;letter-spacing:-0.45px">20.25</div><div class="a" style="left:1877px;top:540px;width:4px;height:1px;background:#ee82ee"></div><div class="t" style="left:1882px;top:536.35px;font-size:10.3px;color:#ee82ee;letter-spacing:-0.45px">20.05</div><div class="a" style="left:1877px;top:582px;width:4px;height:1px;background:#ee82ee"></div><div class="t" style="left:1882px;top:578.30px;font-size:10.3px;color:#ee82ee;letter-spacing:-0.45px">19.85</div><div class="a" style="left:1877px;top:624px;width:4px;height:1px;background:#ee82ee"></div><div class="t" style="left:1882px;top:620.25px;font-size:10.3px;color:#ee82ee;letter-spacing:-0.45px">19.65</div><div class="a" style="left:1877px;top:666px;width:4px;height:1px;background:#ee82ee"></div><div class="t" style="left:1882px;top:662.20px;font-size:10.3px;color:#ee82ee;letter-spacing:-0.45px">19.45</div><div class="a" style="left:1877px;top:708px;width:4px;height:1px;background:#ee82ee"></div><div class="t" style="left:1882px;top:704.15px;font-size:10.3px;color:#ee82ee;letter-spacing:-0.45px">19.25</div><div class="a" style="left:1877px;top:750px;width:4px;height:1px;background:#ee82ee"></div><div class="t" style="left:1882px;top:746.10px;font-size:10.3px;color:#ee82ee;letter-spacing:-0.45px">19.05</div><div class="a" style="left:1877px;top:792px;width:4px;height:1px;background:#ee82ee"></div><div class="a" style="left:1877px;top:834px;width:4px;height:1px;background:#ee82ee"></div><div class="t" style="left:1882px;top:830.00px;font-size:10.3px;color:#ee82ee;letter-spacing:-0.45px">18.65</div><div class="a" style="left:1877px;top:876px;width:4px;height:1px;background:#ee82ee"></div><div class="t" style="left:1882px;top:871.95px;font-size:10.3px;color:#ee82ee;letter-spacing:-0.45px">18.45</div><div class="a" style="left:1877px;top:918px;width:4px;height:1px;background:#ee82ee"></div><div class="t" style="left:1882px;top:913.90px;font-size:10.3px;color:#ee82ee;letter-spacing:-0.45px">18.25</div><div class="a" style="left:1877px;top:960px;width:4px;height:1px;background:#ee82ee"></div><div class="t" style="left:1882px;top:955.85px;font-size:10.3px;color:#ee82ee;letter-spacing:-0.45px">18.05</div><div class="a" style="left:1878px;top:796px;width:31px;height:4px;background:#808080"></div><div class="t" style="left:1882px;top:787.65px;font-size:10.3px;color:#ee82ee;letter-spacing:-0.45px">18.85</div><div class="a" style="left:1878px;top:800px;width:31px;height:11px;background:#ee82ee"></div><div class="t" style="left:1882px;top:800.25px;font-size:10.3px;color:#000;letter-spacing:-0.45px">18.79</div><div class="t" style="left:1881px;top:975.46px;font-size:9.6px;color:#ee82ee;">5</div><div class="t" style="left:1881px;top:1002.46px;font-size:9.6px;color:#ee82ee;">0</div><div class="a" style="left:1877px;top:980px;width:4px;height:1px;background:#ee82ee"></div><div class="a" style="left:1877px;top:1014px;width:4px;height:1px;background:#ee82ee"></div><div class="a" style="left:23px;top:1015px;width:1px;height:5px;background:#ee82ee"></div><div class="t" style="left:22.5px;top:1020.37px;font-size:10.2px;color:#ee82ee;letter-spacing:0.1px;transform:scaleX(0.88);transform-origin:0 0">16 Jun 2022</div><div class="a" style="left:87px;top:1015px;width:1px;height:5px;background:#ee82ee"></div><div class="t" style="left:86.5px;top:1020.37px;font-size:10.2px;color:#ee82ee;letter-spacing:0.1px;transform:scaleX(0.88);transform-origin:0 0">17 Jun 09:00</div><div class="a" style="left:151px;top:1015px;width:1px;height:5px;background:#ee82ee"></div><div class="t" style="left:150.5px;top:1020.37px;font-size:10.2px;color:#ee82ee;letter-spacing:0.1px;transform:scaleX(0.88);transform-origin:0 0">20 Jun 02:00</div><div class="a" style="left:215px;top:1015px;width:1px;height:5px;background:#ee82ee"></div><div class="t" style="left:214.5px;top:1020.37px;font-size:10.2px;color:#ee82ee;letter-spacing:0.1px;transform:scaleX(0.88);transform-origin:0 0">20 Jun 18:00</div><div class="a" style="left:279px;top:1015px;width:1px;height:5px;background:#ee82ee"></div><div class="t" style="left:278.5px;top:1020.37px;font-size:10.2px;color:#ee82ee;letter-spacing:0.1px;transform:scaleX(0.88);transform-origin:0 0">21 Jun 13:00</div><div class="a" style="left:343px;top:1015px;width:1px;height:5px;background:#ee82ee"></div><div class="t" style="left:342.5px;top:1020.37px;font-size:10.2px;color:#ee82ee;letter-spacing:0.1px;transform:scaleX(0.88);transform-origin:0 0">22 Jun 06:00</div><div class="a" style="left:407px;top:1015px;width:1px;height:5px;background:#ee82ee"></div><div class="t" style="left:406.5px;top:1020.37px;font-size:10.2px;color:#ee82ee;letter-spacing:0.1px;transform:scaleX(0.88);transform-origin:0 0">22 Jun 22:00</div><div class="a" style="left:471px;top:1015px;width:1px;height:5px;background:#ee82ee"></div><div class="t" style="left:470.5px;top:1020.37px;font-size:10.2px;color:#ee82ee;letter-spacing:0.1px;transform:scaleX(0.88);transform-origin:0 0">23 Jun 15:00</div><div class="a" style="left:535px;top:1015px;width:1px;height:5px;background:#ee82ee"></div><div class="t" style="left:534.5px;top:1020.37px;font-size:10.2px;color:#ee82ee;letter-spacing:0.1px;transform:scaleX(0.88);transform-origin:0 0">24 Jun 08:00</div><div class="a" style="left:599px;top:1015px;width:1px;height:5px;background:#ee82ee"></div><div class="t" style="left:598.5px;top:1020.37px;font-size:10.2px;color:#ee82ee;letter-spacing:0.1px;transform:scaleX(0.88);transform-origin:0 0">27 Jun 01:00</div><div class="a" style="left:663px;top:1015px;width:1px;height:5px;background:#ee82ee"></div><div class="t" style="left:662.5px;top:1020.37px;font-size:10.2px;color:#ee82ee;letter-spacing:0.1px;transform:scaleX(0.88);transform-origin:0 0">27 Jun 17:00</div><div class="a" style="left:727px;top:1015px;width:1px;height:5px;background:#ee82ee"></div><div class="t" style="left:726.5px;top:1020.37px;font-size:10.2px;color:#ee82ee;letter-spacing:0.1px;transform:scaleX(0.88);transform-origin:0 0">28 Jun 10:00</div><div class="a" style="left:791px;top:1015px;width:1px;height:5px;background:#ee82ee"></div><div class="t" style="left:790.5px;top:1020.37px;font-size:10.2px;color:#ee82ee;letter-spacing:0.1px;transform:scaleX(0.88);transform-origin:0 0">29 Jun 03:00</div><div class="a" style="left:855px;top:1015px;width:1px;height:5px;background:#ee82ee"></div><div class="t" style="left:854.5px;top:1020.37px;font-size:10.2px;color:#ee82ee;letter-spacing:0.1px;transform:scaleX(0.88);transform-origin:0 0">29 Jun 19:00</div><div class="a" style="left:919px;top:1015px;width:1px;height:5px;background:#ee82ee"></div><div class="t" style="left:918.5px;top:1020.37px;font-size:10.2px;color:#ee82ee;letter-spacing:0.1px;transform:scaleX(0.88);transform-origin:0 0">30 Jun 12:00</div><div class="a" style="left:983px;top:1015px;width:1px;height:5px;background:#ee82ee"></div><div class="t" style="left:982.5px;top:1020.37px;font-size:10.2px;color:#ee82ee;letter-spacing:0.1px;transform:scaleX(0.88);transform-origin:0 0">1 Jul 05:00</div><div class="a" style="left:1047px;top:1015px;width:1px;height:5px;background:#ee82ee"></div><div class="t" style="left:1046.5px;top:1020.37px;font-size:10.2px;color:#ee82ee;letter-spacing:0.1px;transform:scaleX(0.88);transform-origin:0 0">1 Jul 21:00</div><div class="a" style="left:1111px;top:1015px;width:1px;height:5px;background:#ee82ee"></div><div class="t" style="left:1110.5px;top:1020.37px;font-size:10.2px;color:#ee82ee;letter-spacing:0.1px;transform:scaleX(0.88);transform-origin:0 0">4 Jul 14:00</div><div class="a" style="left:1175px;top:1015px;width:1px;height:5px;background:#ee82ee"></div><div class="t" style="left:1174.5px;top:1020.37px;font-size:10.2px;color:#ee82ee;letter-spacing:0.1px;transform:scaleX(0.88);transform-origin:0 0">5 Jul 07:00</div><div class="a" style="left:1239px;top:1015px;width:1px;height:5px;background:#ee82ee"></div><div class="t" style="left:1238.5px;top:1020.37px;font-size:10.2px;color:#ee82ee;letter-spacing:0.1px;transform:scaleX(0.88);transform-origin:0 0">6 Jul 02:00</div><div class="a" style="left:1303px;top:1015px;width:1px;height:5px;background:#ee82ee"></div><div class="t" style="left:1302.5px;top:1020.37px;font-size:10.2px;color:#ee82ee;letter-spacing:0.1px;transform:scaleX(0.88);transform-origin:0 0">6 Jul 18:00</div><div class="a" style="left:1367px;top:1015px;width:1px;height:5px;background:#ee82ee"></div><div class="t" style="left:1366.5px;top:1020.37px;font-size:10.2px;color:#ee82ee;letter-spacing:0.1px;transform:scaleX(0.88);transform-origin:0 0">7 Jul 11:00</div><div class="a" style="left:1431px;top:1015px;width:1px;height:5px;background:#ee82ee"></div><div class="t" style="left:1430.5px;top:1020.37px;font-size:10.2px;color:#ee82ee;letter-spacing:0.1px;transform:scaleX(0.88);transform-origin:0 0">8 Jul 04:00</div><div class="a" style="left:1495px;top:1015px;width:1px;height:5px;background:#ee82ee"></div><div class="t" style="left:1494.5px;top:1020.37px;font-size:10.2px;color:#ee82ee;letter-spacing:0.1px;transform:scaleX(0.88);transform-origin:0 0">8 Jul 20:00</div><div class="a" style="left:1559px;top:1015px;width:1px;height:5px;background:#ee82ee"></div><div class="t" style="left:1558.5px;top:1020.37px;font-size:10.2px;color:#ee82ee;letter-spacing:0.1px;transform:scaleX(0.88);transform-origin:0 0">11 Jul 13:00</div><div class="a" style="left:1623px;top:1015px;width:1px;height:5px;background:#ee82ee"></div><div class="t" style="left:1622.5px;top:1020.37px;font-size:10.2px;color:#ee82ee;letter-spacing:0.1px;transform:scaleX(0.88);transform-origin:0 0">12 Jul 06:00</div><div class="a" style="left:1687px;top:1015px;width:1px;height:5px;background:#ee82ee"></div><div class="t" style="left:1686.5px;top:1020.37px;font-size:10.2px;color:#ee82ee;letter-spacing:0.1px;transform:scaleX(0.88);transform-origin:0 0">12 Jul 22:00</div><div class="a" style="left:1751px;top:1015px;width:1px;height:5px;background:#ee82ee"></div><div class="t" style="left:1750.5px;top:1020.37px;font-size:10.2px;color:#ee82ee;letter-spacing:0.1px;transform:scaleX(0.88);transform-origin:0 0">13 Jul 15:00</div><div class="a" style="left:1815px;top:1015px;width:1px;height:5px;background:#ee82ee"></div><div class="t" style="left:1814.5px;top:1020.37px;font-size:10.2px;color:#ee82ee;letter-spacing:0.1px;transform:scaleX(0.88);transform-origin:0 0">14 Jul 08:00</div><div class="a" style="left:1127px;top:1019px;width:80px;height:11px;background:#fff"></div><div class="t" style="left:1130.5px;top:1020.26px;font-size:9.6px;color:#000;letter-spacing:-0.2px">2022.07.05 07:00</div><div class="t" style="left:27px;top:977.98px;font-size:9.5px;color:#ee82ee;letter-spacing:-0.2px;opacity:.9">4 Time frame Sidus 1.0000 2.0000 3.0000 4.0000</div><svg class="a" style="left:23px;top:1009px" width="7" height="7"><path d="M0 0v6h6z" fill="#888"/></svg>
<svg class="a" style="left:15px;top:6px" width="18" height="18"><circle cx="8.5" cy="8.5" r="7.3" fill="#2db45a"/><ellipse cx="7.6" cy="8.5" rx="2.6" ry="5" fill="#fff"/><rect x="9" y="7" width="8" height="3" fill="#6cd08e"/></svg><div class="t" style="left:37.5px;top:9.13px;font-size:11.7px;color:#000;">113528335: MetaQuotes-Demo - Demo Account - MetaQuotes Software Corp. - XAGUSD,H1</div><div class="a" style="left:1812px;top:15px;width:11px;height:1px;background:#000"></div><div class="a" style="left:1853px;top:9px;width:11px;height:11px;border:1px solid #000"></div><svg class="a" style="left:1900px;top:10px" width="11" height="11"><path d="M0.5 0.5L10.5 10.5M10.5 0.5L0.5 10.5" stroke="#000" stroke-width="1.05"/></svg><div class="t" style="left:15.5px;top:34.58px;font-size:12px;color:#000;">File</div><div class="t" style="left:51px;top:34.58px;font-size:12px;color:#000;">View</div><div class="t" style="left:94px;top:34.58px;font-size:12px;color:#000;">Insert</div><div class="t" style="left:141px;top:34.58px;font-size:12px;color:#000;">Charts</div><div class="t" style="left:193px;top:34.58px;font-size:12px;color:#000;">Tools</div><div class="t" style="left:238px;top:34.58px;font-size:12px;color:#000;">Window</div><div class="t" style="left:300px;top:34.58px;font-size:12px;color:#000;">Help</div><svg class="a" style="left:21px;top:65px" width="15" height="15"><rect x="0.5" y="0.5" width="11" height="8" fill="#fff" stroke="#5a8ee0" stroke-dasharray="1 1"/><rect x="3.5" y="5.5" width="11" height="9" fill="#fff" stroke="#5a8ee0" stroke-dasharray="1 1"/><path d="M5 11l2-3 2 3 2-3 2 3" stroke="#3a6fc0" fill="none"/></svg><div class="t" style="left:40.2px;top:66.74px;font-size:11px;color:#000;letter-spacing:-0.15px">XAGUSD,H1</div><div class="a" style="left:1816px;top:63px;width:32px;height:18px;border:1px solid #5a6878;border-radius:3px;background:linear-gradient(180deg,#c8daee 0%,#bcd0e6 45%,#9ab4d2 50%,#b8cfe8 100%)"></div><div class="a" style="left:1850px;top:63px;width:32px;height:18px;border:1px solid #5a6878;border-radius:3px;background:linear-gradient(180deg,#c8daee 0%,#bcd0e6 45%,#9ab4d2 50%,#b8cfe8 100%)"></div><div class="a" style="left:1884px;top:63px;width:32px;height:18px;border:1px solid #4a1010;border-radius:3px;background:linear-gradient(180deg,#e9a08e 0%,#d8826c 45%,#c0452a 50%,#d87860 100%)"></div><div class="a" style="left:1826px;top:71px;width:11px;height:5px;background:#f4f4f4;border:1px solid #4a4a4a;border-radius:1px"></div><div class="a" style="left:1860px;top:67px;width:11px;height:9px;background:#f4f4f4;border:1px solid #4a4a4a;border-radius:1px"></div><div class="a" style="left:1863px;top:70px;width:5px;height:3px;background:#a8bcd4;border:1px solid #4a4a4a"></div><svg class="a" style="left:1893px;top:66px" width="14" height="12"><path d="M2 1.5L12 10.5M12 1.5L2 10.5" stroke="#4a4a4a" stroke-width="4"/><path d="M2 1.5L12 10.5M12 1.5L2 10.5" stroke="#fff" stroke-width="2.2"/></svg>
<div class="a" style="left:0;top:1040px;width:1920px;height:40px;background:#101010"></div><svg class="a" style="left:16px;top:1051px" width="17" height="18"><path d="M0 2.3l7-1v7.2H0zM8 1.1L16 0v8.5H8zM0 9.5h7v7.2l-7-1zM8 9.5h8V18l-8-1.1z" fill="#fff"/></svg><div class="a" style="left:48px;top:1040px;width:344px;height:40px;background:#3f3f3f;border-left:1px solid #505050;border-top:1px solid #606060;border-right:1px solid #606060"></div><svg class="a" style="left:59px;top:1051px" width="18" height="18"><circle cx="10.5" cy="6.5" r="5.3" fill="none" stroke="#ddd" stroke-width="1.3"/><path d="M6.8 10.2L1 16" stroke="#ddd" stroke-width="1.5"/></svg><div class="t" style="left:88px;top:1053.20px;font-size:14.4px;color:#d8d8d8;">Type here to search</div><svg class="a" style="left:300px;top:1040px" width="92" height="40"><defs><radialGradient id="bb" cx="0.45" cy="0.3" r="0.8"><stop offset="0" stop-color="#f0f0f0"/><stop offset="0.6" stop-color="#e0d0e0"/><stop offset="1" stop-color="#c890d8"/></radialGradient></defs><circle cx="28.6" cy="15.6" r="10.4" fill="url(#bb)"/><path d="M27 6q3 5 11 9M19 14q6 2 10 11" stroke="#f03070" stroke-width="1.6" stroke-dasharray="1.5 1.5" fill="none"/><path d="M42.5 14h12.5M41.5 18l14 6M40 21.5l10 7" stroke="#8080e8" stroke-width="2" stroke-linecap="round" opacity=".85"/><path d="M68.5 6l2.4 5 5.3.6-4 3.6 1.1 5.3-4.8-2.7-4.8 2.7 1.1-5.3-4-3.6 5.3-.6z" fill="#f7b500" stroke="#f7b500" stroke-width="1.5" stroke-linejoin="round"/><path d="M83.5 14.5L65.5 34" stroke="#c27448" stroke-width="3.5" stroke-linecap="round"/><path d="M63 33l4 3" stroke="#a85a30" stroke-width="2"/><circle cx="26" cy="31" r="2" fill="#fbb500"/><path d="M41.7 31l1.2 2.8 2.8 1.2-2.8 1.2-1.2 2.8-1.2-2.8-2.8-1.2 2.8-1.2z" fill="#e070f0"/><circle cx="79.7" cy="32.8" r="2" fill="#60d0f0"/></svg><svg class="a" style="left:406px;top:1050px" width="20" height="20"><circle cx="10" cy="10" r="7.2" fill="none" stroke="#fff" stroke-width="2"/></svg><svg class="a" style="left:454px;top:1051px" width="20" height="18"><rect x="2" y="3.5" width="13" height="11" fill="none" stroke="#fff" stroke-width="1.4"/><path d="M0 1h15M0 17h15" stroke="#fff" stroke-width="1.4"/><path d="M18 2v3M18 7v4M18 13v3" stroke="#fff" stroke-width="1.4"/></svg><svg class="a" style="left:503px;top:1048px" width="25" height="24"><path d="M0 8L12 0.5 24 8z" fill="#0b5cb8"/><path d="M0 8h24v15H0z" fill="#1e9be8"/><path d="M2 8h20l-10 6z" fill="#f0f0f0"/><path d="M0 23L12 14 24 23z" fill="#1574d0" opacity=".6"/><path d="M12 14L24 8v15z" fill="#40c0f0" opacity=".7"/></svg><svg class="a" style="left:555px;top:1050px" width="22" height="20"><path d="M7 2v12" stroke="#222" stroke-width="2"/><circle cx="4.5" cy="15" r="3.5" fill="#1a1a1a"/><path d="M7 2l6 3" stroke="#1a1a1a" stroke-width="2"/><path d="M14 6l5 4-3 2 3 2-5 4" stroke="#333" fill="none" stroke-width="1.2"/></svg><svg class="a" style="left:600px;top:1050px" width="24" height="20"><path d="M0 2h9l2 2h13v15H0z" fill="#e8b030"/><path d="M0 6h24v13H0z" fill="#ffd65c"/><path d="M7 12h10v7H7z" fill="#2a8ad8"/><path d="M9 14h6v5H9z" fill="#ffd65c"/></svg><div class="a" style="left:643px;top:1040px;width:40px;height:40px;background:#8b1414"></div><div class="a" style="left:643px;top:1077px;width:40px;height:3px;background:#ff2020"></div><svg class="a" style="left:650px;top:1048px" width="24" height="24"><ellipse cx="12" cy="12" rx="11" ry="11.5" fill="#ff1b2d"/><ellipse cx="12" cy="12" rx="5" ry="8.5" fill="#8b1414"/></svg><svg class="a" style="left:699px;top:1049px" width="23" height="23"><circle cx="11.5" cy="11.5" r="11" fill="#db4437"/><path d="M11.5 11.5L2 6.5A11 11 0 0 0 6 21z" fill="#0f9d58"/><path d="M11.5 11.5L6 21A11 11 0 0 0 22.5 11.5z" fill="#fbbc05"/><path d="M11.5 11.5L22.5 11.5A11 11 0 0 0 21 6z" fill="#db4437"/><circle cx="11.5" cy="11.5" r="5" fill="#fff"/><circle cx="11.5" cy="11.5" r="4" fill="#4285f4"/></svg><svg class="a" style="left:747px;top:1048px" width="24" height="24"><path d="M12 1l5 7-5 3-5-3z" fill="#3fb04a"/><path d="M3 12l6-2 2 6-6 3z" fill="#2f8ee0"/><path d="M21 12l-6-2-2 6 6 3z" fill="#50c0f0"/><circle cx="12" cy="14" r="6" fill="#f0b020"/><path d="M10 11h4M10 14h4M10 17h4" stroke="#fff" stroke-width="1.2"/></svg><div class="a" style="left:786px;top:1040px;width:47px;height:40px;background:#2e2e2e"></div><div class="a" style="left:786px;top:1078px;width:47px;height:2px;background:#76b9ed"></div><svg class="a" style="left:797px;top:1048px" width="24" height="24"><circle cx="11" cy="12" r="10" fill="#2db45a"/><ellipse cx="10" cy="12" rx="3.5" ry="6.5" fill="#2e2e2e"/><rect x="12" y="9" width="11" height="2" fill="#2db45a"/><rect x="12" y="13" width="11" height="2" fill="#2db45a"/></svg><div class="a" style="left:838px;top:1078px;width:40px;height:2px;background:#76b9ed"></div><svg class="a" style="left:846px;top:1048px" width="24" height="24"><rect x="1" y="1" width="22" height="7" fill="#c03050"/><rect x="1" y="8" width="22" height="8" fill="#3060c0"/><rect x="1" y="16" width="22" height="7" fill="#30a040"/><rect x="9" y="1" width="6" height="22" fill="#e0b060"/><rect x="10" y="10" width="4" height="4" fill="#fff"/></svg><svg class="a" style="left:1475px;top:1050px" width="18" height="18"><circle cx="11" cy="5" r="3" fill="none" stroke="#fff" stroke-width="1.2"/><path d="M6 16q1-6 5-6t5 6" fill="none" stroke="#fff" stroke-width="1.2"/><circle cx="6" cy="9" r="2.5" fill="none" stroke="#fff" stroke-width="1.2"/><path d="M1 17q0-4 5-4" fill="none" stroke="#fff" stroke-width="1.2"/></svg><svg class="a" style="left:1597px;top:1049px" width="22" height="22"><path d="M14 1A10 10 0 1 0 21 15 8 8 0 0 1 14 1z" fill="#f4b41a"/></svg><div class="t" style="left:1629.5px;top:1053.76px;font-size:14px;color:#f0f0f0;letter-spacing:-0.1px">75°F&nbsp; Clear</div><svg class="a" style="left:1712px;top:1054px" width="14" height="10"><path d="M1 8l6-6 6 6" fill="none" stroke="#fff" stroke-width="1.3"/></svg><svg class="a" style="left:1735px;top:1052px" width="18" height="16"><rect x="1" y="3" width="14" height="8" fill="none" stroke="#fff" stroke-width="1.2"/><rect x="15" y="5" width="2" height="4" fill="#fff"/><circle cx="11" cy="11" r="4" fill="#10a040"/></svg><svg class="a" style="left:1760px;top:1050px" width="16" height="20"><rect x="3" y="6" width="8" height="8" fill="none" stroke="#fff" stroke-width="1.2"/><path d="M11 8l3-2v8l-3-2" fill="none" stroke="#fff" stroke-width="1.2"/><path d="M2 3q-2 7 0 14M14 3q2 7 0 14" fill="none" stroke="#aaa" stroke-width="1" stroke-dasharray="2 1"/></svg><svg class="a" style="left:1782px;top:1051px" width="18" height="18"><path d="M1 6h3l5-4v14l-5-4H1z" fill="none" stroke="#fff" stroke-width="1.2"/><path d="M12 6q2 3 0 6M14 4q3 5 0 10" fill="none" stroke="#fff" stroke-width="1.2"/></svg><div class="t" style="left:1810.5px;top:1044.64px;font-size:11.6px;color:#fff;">12:43 AM</div><div class="t" style="left:1808px;top:1061.58px;font-size:12px;color:#fff;">7/20/2022</div><svg class="a" style="left:1878px;top:1049px" width="26" height="26"><path d="M1 2h17v12H9l-4 4v-4H1z" fill="#fff"/><path d="M4 5h11M4 8h11M4 11h8" stroke="#101010" stroke-width="1"/><circle cx="17" cy="17" r="7" fill="#101010" stroke="#888" stroke-width="1"/><text x="17" y="21" font-size="11" fill="#fff" text-anchor="middle" font-family="Liberation Sans">1</text></svg><div class="a" style="left:1914px;top:1040px;width:1px;height:40px;background:#777"></div>
</body></html>
